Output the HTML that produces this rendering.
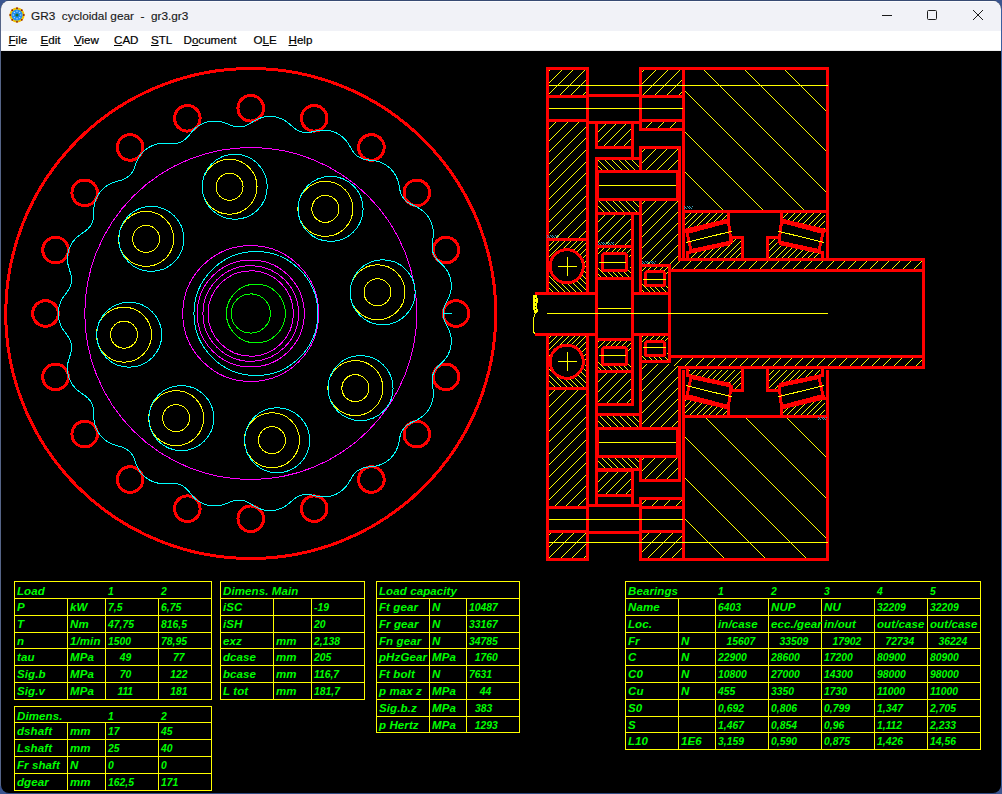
<!DOCTYPE html>
<html><head><meta charset="utf-8"><title>GR3</title>
<style>
html,body{margin:0;padding:0;}
body{width:1002px;height:794px;overflow:hidden;background:#3a5590;position:relative;font-family:"Liberation Sans",sans-serif;}
#win{position:absolute;left:1px;top:1px;width:1000px;height:792px;border-radius:8px;overflow:hidden;background:#000;}
#title{position:absolute;left:-1px;top:-1px;width:1002px;height:31px;background:#f1f2f7;border-top:0;}
#hl{position:absolute;left:0;top:1px;width:1002px;height:1px;background:#fbfbfd;}
#ttxt{position:absolute;left:31px;top:9px;font-size:11.8px;color:#1a1a1a;-webkit-text-stroke:0.15px #1a1a1a;white-space:pre;}
#menu{position:absolute;left:-1px;top:30px;width:1002px;height:19px;background:#ffffff;border-bottom:1px solid #f0f0f0;}
#menu span{font-size:11.6px;color:#000;-webkit-text-stroke:0.2px #000;line-height:19px;top:-1px !important;}
#menu u{text-decoration:underline;text-underline-offset:1px;}
.tb{position:absolute;top:0;height:31px;}
</style></head><body>
<div id="win">
<svg width="1002" height="794" viewBox="0 0 1002 794" shape-rendering="crispEdges" style="position:absolute;left:-1px;top:-1px"><defs><clipPath id="c1"><polygon points="549,70 586,70 586,95 549,95"/></clipPath><clipPath id="c2"><polygon points="549,122 586,122 586,238 549,238"/></clipPath><clipPath id="c3"><polygon points="549,241 586,241 586,266 549,266"/></clipPath><clipPath id="c4"><polygon points="549,266 586,266 586,292 549,292"/></clipPath><clipPath id="c5"><polygon points="642,70 682,70 682,95 642,95"/></clipPath><clipPath id="c6"><polygon points="642,122 682,122 682,128 642,128"/></clipPath><clipPath id="c7"><polygon points="685,70 826,70 826,210 685,210"/></clipPath><clipPath id="c8"><polygon points="598,160 639,160 639,170 598,170"/></clipPath><clipPath id="c9"><polygon points="642,149 678,149 678,170 642,170"/></clipPath><clipPath id="c10"><polygon points="598,201 639,201 639,212 598,212"/></clipPath><clipPath id="c11"><polygon points="642,201 678,201 678,264 642,264"/></clipPath><clipPath id="c12"><polygon points="642,267 668,267 668,279 642,279"/></clipPath><clipPath id="c13"><polygon points="642,279 668,279 668,292 642,292"/></clipPath><clipPath id="c14"><polygon points="671,261 922,261 922,269 671,269"/></clipPath><clipPath id="c15"><polygon points="685,213 727,213 727,220 686,230 685,230"/></clipPath><clipPath id="c16"><polygon points="689,251 730,243 730,239 742,239 742,258 689,258"/></clipPath><clipPath id="c17"><polygon points="825,213 783,213 783,220 824,230 825,230"/></clipPath><clipPath id="c18"><polygon points="821,251 780,243 780,239 768,239 768,258 821,258"/></clipPath><clipPath id="c19"><polygon points="549,533 586,533 586,558 549,558"/></clipPath><clipPath id="c20"><polygon points="549,390 586,390 586,506 549,506"/></clipPath><clipPath id="c21"><polygon points="549,362 586,362 586,387 549,387"/></clipPath><clipPath id="c22"><polygon points="549,336 586,336 586,362 549,362"/></clipPath><clipPath id="c23"><polygon points="642,533 682,533 682,558 642,558"/></clipPath><clipPath id="c24"><polygon points="642,500 682,500 682,506 642,506"/></clipPath><clipPath id="c25"><polygon points="685,418 826,418 826,558 685,558"/></clipPath><clipPath id="c26"><polygon points="598,458 639,458 639,468 598,468"/></clipPath><clipPath id="c27"><polygon points="642,458 678,458 678,479 642,479"/></clipPath><clipPath id="c28"><polygon points="598,416 639,416 639,427 598,427"/></clipPath><clipPath id="c29"><polygon points="642,364 678,364 678,427 642,427"/></clipPath><clipPath id="c30"><polygon points="642,348 668,348 668,360 642,360"/></clipPath><clipPath id="c31"><polygon points="642,335 668,335 668,348 642,348"/></clipPath><clipPath id="c32"><polygon points="671,358 922,358 922,366 671,366"/></clipPath><clipPath id="c33"><polygon points="685,415 727,415 727,408 686,398 685,398"/></clipPath><clipPath id="c34"><polygon points="689,377 730,385 730,389 742,389 742,370 689,370"/></clipPath><clipPath id="c35"><polygon points="825,415 783,415 783,408 824,398 825,398"/></clipPath><clipPath id="c36"><polygon points="821,377 780,385 780,389 768,389 768,370 821,370"/></clipPath><clipPath id="c37"><polygon points="598,124 631,124 631,146 598,146"/></clipPath><clipPath id="c38"><polygon points="598,215 631,215 631,245 598,245"/></clipPath><clipPath id="c39"><polygon points="598,248 631,248 631,262 598,262"/></clipPath><clipPath id="c40"><polygon points="598,262 631,262 631,277 598,277"/></clipPath><clipPath id="c41"><polygon points="598,472 631,472 631,494 598,494"/></clipPath><clipPath id="c42"><polygon points="598,373 631,373 631,403 598,403"/></clipPath><clipPath id="c43"><polygon points="598,356 631,356 631,370 598,370"/></clipPath><clipPath id="c44"><polygon points="598,341 631,341 631,356 598,356"/></clipPath></defs><circle cx="250.75" cy="313.5" r="245.0" fill="none" stroke="#ff0000" stroke-width="3"/>
<circle cx="456.0" cy="313.5" r="12.8" fill="none" stroke="#ff0000" stroke-width="3"/>
<circle cx="445.9543499695802" cy="376.925738095458" r="12.8" fill="none" stroke="#ff0000" stroke-width="3"/>
<circle cx="416.800738095458" cy="434.1429230330301" r="12.8" fill="none" stroke="#ff0000" stroke-width="3"/>
<circle cx="371.3929230330301" cy="479.550738095458" r="12.8" fill="none" stroke="#ff0000" stroke-width="3"/>
<circle cx="314.175738095458" cy="508.7043499695802" r="12.8" fill="none" stroke="#ff0000" stroke-width="3"/>
<circle cx="250.75" cy="518.75" r="12.8" fill="none" stroke="#ff0000" stroke-width="3"/>
<circle cx="187.32426190454206" cy="508.7043499695803" r="12.8" fill="none" stroke="#ff0000" stroke-width="3"/>
<circle cx="130.1070769669699" cy="479.550738095458" r="12.8" fill="none" stroke="#ff0000" stroke-width="3"/>
<circle cx="84.69926190454206" cy="434.1429230330301" r="12.8" fill="none" stroke="#ff0000" stroke-width="3"/>
<circle cx="55.54565003041975" cy="376.925738095458" r="12.8" fill="none" stroke="#ff0000" stroke-width="3"/>
<circle cx="45.5" cy="313.5" r="12.8" fill="none" stroke="#ff0000" stroke-width="3"/>
<circle cx="55.545650030419694" cy="250.07426190454214" r="12.8" fill="none" stroke="#ff0000" stroke-width="3"/>
<circle cx="84.69926190454203" cy="192.8570769669699" r="12.8" fill="none" stroke="#ff0000" stroke-width="3"/>
<circle cx="130.10707696696988" cy="147.44926190454206" r="12.8" fill="none" stroke="#ff0000" stroke-width="3"/>
<circle cx="187.32426190454203" cy="118.29565003041975" r="12.8" fill="none" stroke="#ff0000" stroke-width="3"/>
<circle cx="250.74999999999997" cy="108.25" r="12.8" fill="none" stroke="#ff0000" stroke-width="3"/>
<circle cx="314.1757380954579" cy="118.29565003041972" r="12.8" fill="none" stroke="#ff0000" stroke-width="3"/>
<circle cx="371.39292303303006" cy="147.44926190454203" r="12.8" fill="none" stroke="#ff0000" stroke-width="3"/>
<circle cx="416.800738095458" cy="192.85707696696983" r="12.8" fill="none" stroke="#ff0000" stroke-width="3"/>
<circle cx="445.9543499695802" cy="250.074261904542" r="12.8" fill="none" stroke="#ff0000" stroke-width="3"/>
<polygon points="443.20,313.50 443.21,314.03 443.23,314.56 443.27,315.08 443.32,315.60 443.39,316.11 443.46,316.61 443.55,317.10 443.65,317.57 443.76,318.03 443.88,318.48 444.00,318.91 444.13,319.32 444.26,319.73 444.39,320.11 444.53,320.49 444.67,320.85 444.81,321.19 444.95,321.53 445.09,321.85 445.23,322.16 445.37,322.46 445.50,322.76 445.64,323.04 445.77,323.32 445.91,323.58 446.04,323.85 446.17,324.10 446.30,324.36 446.42,324.60 446.55,324.84 446.67,325.08 446.79,325.32 446.92,325.55 447.04,325.79 447.15,326.01 447.27,326.24 447.39,326.47 447.50,326.70 447.62,326.92 447.73,327.15 447.84,327.38 447.95,327.60 448.06,327.83 448.17,328.06 448.28,328.29 448.39,328.52 448.49,328.75 448.60,328.98 448.70,329.22 448.81,329.46 448.91,329.70 449.01,329.94 449.11,330.18 449.21,330.43 449.30,330.67 449.40,330.92 449.49,331.18 449.58,331.43 449.68,331.69 449.76,331.95 449.85,332.22 449.94,332.48 450.02,332.75 450.10,333.02 450.18,333.30 450.26,333.58 450.34,333.86 450.41,334.14 450.48,334.43 450.55,334.71 450.62,335.00 450.68,335.30 450.74,335.59 450.80,335.89 450.85,336.19 450.91,336.50 450.95,336.80 451.00,337.11 451.04,337.42 451.08,337.73 451.12,338.05 451.15,338.36 451.18,338.68 451.21,339.00 451.24,339.32 451.26,339.64 451.27,339.97 451.28,340.29 451.29,340.62 451.30,340.95 451.30,341.28 451.30,341.61 451.29,341.94 451.28,342.27 451.27,342.61 451.25,342.94 451.23,343.27 451.20,343.61 451.18,343.94 451.14,344.28 451.11,344.61 451.06,344.94 451.02,345.28 450.97,345.61 450.92,345.94 450.86,346.28 450.80,346.61 450.74,346.94 450.67,347.27 450.60,347.60 450.52,347.93 450.44,348.25 450.36,348.58 450.28,348.90 450.19,349.22 450.09,349.54 450.00,349.86 449.89,350.18 449.79,350.49 449.68,350.80 449.57,351.11 449.46,351.42 449.34,351.73 449.23,352.03 449.10,352.33 448.98,352.63 448.85,352.92 448.72,353.22 448.59,353.51 448.45,353.79 448.31,354.08 448.17,354.36 448.03,354.63 447.89,354.91 447.74,355.18 447.59,355.45 447.44,355.71 447.29,355.98 447.13,356.23 446.98,356.49 446.82,356.74 446.66,356.99 446.50,357.24 446.34,357.48 446.17,357.72 446.01,357.95 445.84,358.18 445.68,358.41 445.51,358.64 445.34,358.86 445.18,359.08 445.01,359.30 444.84,359.51 444.66,359.72 444.49,359.93 444.32,360.13 444.15,360.34 443.98,360.54 443.80,360.73 443.63,360.93 443.46,361.12 443.28,361.31 443.11,361.50 442.93,361.68 442.75,361.87 442.58,362.05 442.40,362.23 442.22,362.41 442.04,362.59 441.87,362.77 441.69,362.95 441.51,363.12 441.32,363.30 441.14,363.48 440.96,363.65 440.77,363.83 440.58,364.01 440.39,364.19 440.20,364.37 440.01,364.56 439.81,364.75 439.61,364.94 439.41,365.13 439.21,365.33 439.00,365.53 438.79,365.74 438.57,365.95 438.35,366.17 438.13,366.40 437.91,366.64 437.67,366.88 437.44,367.14 437.20,367.40 436.96,367.68 436.71,367.97 436.46,368.27 436.21,368.58 435.96,368.91 435.70,369.26 435.45,369.62 435.19,369.99 434.94,370.39 434.69,370.79 434.44,371.22 434.20,371.66 433.97,372.11 433.75,372.57 433.53,373.05 433.33,373.54 433.15,374.04 432.97,374.54 432.82,375.04 432.67,375.55 432.55,376.06 432.44,376.57 432.34,377.07 432.26,377.56 432.19,378.04 432.14,378.52 432.10,378.99 432.07,379.44 432.05,379.88 432.04,380.31 432.03,380.73 432.04,381.13 432.05,381.52 432.07,381.90 432.09,382.27 432.11,382.63 432.14,382.97 432.17,383.31 432.21,383.63 432.24,383.95 432.28,384.26 432.32,384.56 432.36,384.86 432.40,385.14 432.44,385.43 432.48,385.70 432.52,385.98 432.56,386.24 432.60,386.51 432.63,386.77 432.67,387.03 432.71,387.29 432.75,387.54 432.79,387.79 432.82,388.05 432.86,388.30 432.89,388.55 432.92,388.80 432.96,389.05 432.99,389.30 433.02,389.55 433.04,389.80 433.07,390.06 433.10,390.31 433.12,390.56 433.14,390.82 433.17,391.08 433.19,391.33 433.20,391.59 433.22,391.86 433.23,392.12 433.24,392.38 433.25,392.65 433.26,392.92 433.27,393.19 433.27,393.46 433.27,393.74 433.27,394.02 433.27,394.30 433.26,394.58 433.25,394.86 433.24,395.14 433.22,395.43 433.20,395.72 433.18,396.01 433.16,396.30 433.13,396.59 433.10,396.89 433.07,397.19 433.03,397.49 432.99,397.79 432.95,398.09 432.90,398.39 432.85,398.70 432.80,399.00 432.74,399.31 432.68,399.62 432.61,399.92 432.54,400.23 432.47,400.54 432.39,400.86 432.31,401.17 432.23,401.48 432.14,401.79 432.05,402.10 431.95,402.41 431.86,402.73 431.75,403.04 431.64,403.35 431.53,403.66 431.42,403.97 431.30,404.29 431.18,404.60 431.05,404.90 430.92,405.21 430.79,405.52 430.65,405.83 430.51,406.13 430.36,406.43 430.21,406.74 430.06,407.04 429.90,407.34 429.74,407.63 429.58,407.93 429.41,408.22 429.25,408.51 429.07,408.80 428.90,409.09 428.72,409.37 428.54,409.65 428.35,409.93 428.16,410.21 427.97,410.48 427.78,410.76 427.58,411.02 427.38,411.29 427.18,411.55 426.98,411.81 426.77,412.07 426.56,412.32 426.35,412.57 426.14,412.82 425.93,413.06 425.71,413.30 425.49,413.53 425.28,413.77 425.06,413.99 424.83,414.22 424.61,414.44 424.39,414.66 424.16,414.87 423.93,415.09 423.71,415.29 423.48,415.50 423.25,415.70 423.02,415.89 422.79,416.09 422.56,416.28 422.33,416.46 422.10,416.64 421.86,416.82 421.63,417.00 421.40,417.17 421.17,417.33 420.94,417.50 420.71,417.66 420.47,417.82 420.24,417.97 420.01,418.12 419.78,418.27 419.55,418.42 419.32,418.56 419.09,418.70 418.86,418.84 418.64,418.97 418.41,419.10 418.18,419.23 417.95,419.36 417.73,419.48 417.50,419.60 417.27,419.72 417.05,419.84 416.82,419.96 416.59,420.07 416.37,420.19 416.14,420.30 415.91,420.41 415.69,420.52 415.46,420.63 415.23,420.73 415.00,420.84 414.77,420.95 414.54,421.06 414.30,421.17 414.06,421.28 413.83,421.39 413.58,421.50 413.34,421.61 413.09,421.72 412.84,421.84 412.58,421.96 412.32,422.08 412.06,422.21 411.79,422.34 411.52,422.47 411.23,422.61 410.95,422.76 410.65,422.91 410.35,423.07 410.04,423.24 409.73,423.42 409.41,423.61 409.08,423.81 408.74,424.01 408.39,424.24 408.04,424.47 407.69,424.72 407.33,424.99 406.96,425.27 406.59,425.56 406.22,425.87 405.85,426.20 405.49,426.55 405.12,426.91 404.76,427.28 404.41,427.67 404.07,428.08 403.73,428.49 403.41,428.91 403.11,429.34 402.81,429.78 402.54,430.22 402.27,430.66 402.03,431.10 401.80,431.54 401.59,431.98 401.39,432.41 401.20,432.83 401.04,433.25 400.88,433.66 400.74,434.05 400.60,434.44 400.48,434.82 400.37,435.19 400.27,435.55 400.17,435.90 400.08,436.24 400.00,436.57 399.92,436.90 399.85,437.21 399.78,437.52 399.72,437.82 399.66,438.12 399.60,438.40 399.55,438.69 399.49,438.96 399.44,439.24 399.39,439.51 399.34,439.77 399.30,440.03 399.25,440.29 399.20,440.55 399.15,440.80 399.11,441.06 399.06,441.31 399.01,441.56 398.96,441.80 398.91,442.05 398.86,442.30 398.81,442.55 398.76,442.79 398.70,443.04 398.65,443.29 398.59,443.54 398.53,443.78 398.47,444.03 398.41,444.28 398.34,444.53 398.28,444.78 398.21,445.04 398.14,445.29 398.06,445.54 397.99,445.80 397.91,446.06 397.83,446.31 397.74,446.57 397.66,446.83 397.57,447.09 397.47,447.35 397.38,447.62 397.28,447.88 397.18,448.15 397.07,448.41 396.96,448.68 396.85,448.95 396.74,449.21 396.62,449.48 396.49,449.75 396.37,450.02 396.24,450.29 396.10,450.56 395.97,450.83 395.83,451.11 395.68,451.38 395.53,451.65 395.38,451.92 395.22,452.19 395.06,452.46 394.90,452.73 394.73,453.00 394.56,453.27 394.39,453.54 394.21,453.81 394.03,454.08 393.84,454.34 393.65,454.61 393.46,454.87 393.26,455.13 393.06,455.39 392.85,455.65 392.64,455.91 392.43,456.17 392.22,456.42 392.00,456.67 391.78,456.93 391.55,457.17 391.33,457.42 391.09,457.66 390.86,457.90 390.62,458.14 390.38,458.38 390.14,458.61 389.89,458.84 389.64,459.07 389.39,459.30 389.14,459.52 388.88,459.74 388.63,459.95 388.36,460.17 388.10,460.37 387.84,460.58 387.57,460.78 387.30,460.98 387.03,461.18 386.76,461.37 386.49,461.56 386.21,461.74 385.94,461.92 385.66,462.10 385.38,462.27 385.10,462.44 384.82,462.61 384.54,462.77 384.26,462.93 383.98,463.08 383.69,463.24 383.41,463.38 383.13,463.53 382.84,463.66 382.56,463.80 382.28,463.93 382.00,464.06 381.71,464.18 381.43,464.30 381.15,464.42 380.87,464.53 380.59,464.64 380.31,464.75 380.03,464.85 379.75,464.95 379.47,465.05 379.20,465.14 378.92,465.23 378.65,465.31 378.37,465.39 378.10,465.47 377.83,465.55 377.56,465.62 377.29,465.69 377.03,465.76 376.76,465.82 376.50,465.88 376.23,465.94 375.97,466.00 375.71,466.05 375.45,466.10 375.19,466.15 374.94,466.20 374.68,466.24 374.43,466.29 374.17,466.33 373.92,466.37 373.67,466.40 373.42,466.44 373.17,466.47 372.92,466.51 372.67,466.54 372.42,466.57 372.16,466.60 371.91,466.63 371.66,466.66 371.41,466.68 371.15,466.71 370.90,466.74 370.64,466.76 370.38,466.79 370.12,466.81 369.85,466.84 369.58,466.87 369.31,466.90 369.03,466.93 368.75,466.96 368.46,466.99 368.16,467.02 367.86,467.06 367.56,467.10 367.24,467.14 366.92,467.19 366.59,467.24 366.24,467.30 365.89,467.36 365.53,467.43 365.16,467.51 364.78,467.59 364.39,467.68 363.99,467.79 363.57,467.90 363.15,468.03 362.72,468.17 362.28,468.32 361.83,468.49 361.38,468.67 360.92,468.87 360.46,469.08 360.00,469.31 359.54,469.56 359.08,469.82 358.62,470.09 358.18,470.38 357.74,470.68 357.32,471.00 356.91,471.32 356.51,471.65 356.12,471.99 355.76,472.32 355.40,472.67 355.07,473.01 354.75,473.35 354.45,473.69 354.16,474.03 353.88,474.36 353.63,474.69 353.38,475.01 353.15,475.33 352.93,475.64 352.72,475.94 352.52,476.24 352.33,476.53 352.15,476.81 351.97,477.09 351.81,477.36 351.65,477.63 351.49,477.89 351.34,478.15 351.19,478.40 351.05,478.65 350.91,478.89 350.78,479.13 350.64,479.37 350.51,479.60 350.38,479.83 350.25,480.06 350.13,480.28 350.00,480.51 349.87,480.73 349.75,480.95 349.62,481.17 349.49,481.39 349.36,481.61 349.24,481.83 349.11,482.04 348.98,482.26 348.84,482.48 348.71,482.69 348.57,482.91 348.44,483.12 348.30,483.34 348.16,483.55 348.01,483.77 347.87,483.99 347.72,484.20 347.57,484.42 347.42,484.64 347.26,484.85 347.10,485.07 346.94,485.29 346.77,485.50 346.61,485.72 346.44,485.94 346.26,486.16 346.08,486.37 345.90,486.59 345.72,486.81 345.53,487.03 345.34,487.24 345.14,487.46 344.95,487.67 344.74,487.89 344.54,488.10 344.33,488.32 344.12,488.53 343.90,488.74 343.68,488.96 343.46,489.17 343.23,489.38 343.00,489.58 342.77,489.79 342.53,489.99 342.29,490.20 342.05,490.40 341.80,490.60 341.55,490.80 341.29,491.00 341.04,491.19 340.78,491.38 340.51,491.57 340.24,491.76 339.97,491.95 339.70,492.13 339.42,492.31 339.15,492.49 338.86,492.66 338.58,492.84 338.29,493.00 338.00,493.17 337.71,493.33 337.42,493.49 337.12,493.65 336.82,493.81 336.52,493.96 336.22,494.10 335.91,494.25 335.60,494.39 335.30,494.52 334.99,494.66 334.68,494.79 334.36,494.91 334.05,495.03 333.73,495.15 333.42,495.27 333.10,495.38 332.78,495.48 332.47,495.59 332.15,495.69 331.83,495.78 331.51,495.87 331.19,495.96 330.87,496.04 330.55,496.12 330.23,496.20 329.91,496.27 329.59,496.34 329.27,496.40 328.95,496.46 328.64,496.52 328.32,496.57 328.00,496.62 327.69,496.67 327.38,496.71 327.06,496.75 326.75,496.78 326.44,496.81 326.13,496.84 325.83,496.87 325.52,496.89 325.22,496.90 324.92,496.92 324.62,496.93 324.32,496.94 324.02,496.94 323.73,496.94 323.43,496.94 323.14,496.94 322.86,496.93 322.57,496.92 322.29,496.91 322.00,496.89 321.72,496.88 321.45,496.86 321.17,496.83 320.90,496.81 320.63,496.78 320.36,496.75 320.09,496.72 319.83,496.69 319.56,496.66 319.30,496.62 319.05,496.58 318.79,496.54 318.53,496.50 318.28,496.46 318.03,496.41 317.78,496.37 317.53,496.32 317.28,496.27 317.03,496.22 316.78,496.17 316.53,496.12 316.29,496.07 316.04,496.01 315.79,495.96 315.54,495.90 315.30,495.85 315.05,495.79 314.79,495.73 314.54,495.67 314.29,495.61 314.03,495.55 313.76,495.49 313.50,495.43 313.23,495.36 312.95,495.30 312.67,495.24 312.39,495.17 312.10,495.11 311.80,495.05 311.49,494.99 311.17,494.93 310.85,494.87 310.51,494.81 310.16,494.75 309.81,494.70 309.44,494.65 309.06,494.60 308.66,494.56 308.26,494.52 307.84,494.49 307.40,494.47 306.96,494.46 306.50,494.45 306.02,494.46 305.54,494.48 305.05,494.51 304.55,494.55 304.04,494.61 303.52,494.69 303.01,494.78 302.49,494.89 301.97,495.01 301.46,495.14 300.95,495.29 300.45,495.46 299.96,495.63 299.48,495.82 299.02,496.02 298.57,496.22 298.13,496.44 297.71,496.65 297.30,496.88 296.91,497.10 296.54,497.33 296.18,497.55 295.83,497.78 295.51,498.00 295.19,498.22 294.89,498.45 294.60,498.66 294.32,498.88 294.05,499.09 293.79,499.30 293.54,499.50 293.29,499.70 293.06,499.90 292.83,500.10 292.61,500.29 292.39,500.48 292.18,500.67 291.97,500.85 291.76,501.03 291.56,501.21 291.36,501.39 291.16,501.56 290.97,501.74 290.78,501.91 290.58,502.08 290.39,502.25 290.20,502.41 290.01,502.58 289.82,502.75 289.63,502.91 289.43,503.07 289.24,503.24 289.05,503.40 288.85,503.56 288.65,503.72 288.46,503.88 288.25,504.04 288.05,504.20 287.85,504.36 287.64,504.51 287.43,504.67 287.22,504.83 287.01,504.98 286.79,505.14 286.57,505.29 286.35,505.44 286.12,505.60 285.90,505.75 285.66,505.90 285.43,506.05 285.19,506.20 284.95,506.34 284.71,506.49 284.46,506.64 284.21,506.78 283.96,506.92 283.71,507.06 283.45,507.20 283.18,507.34 282.92,507.47 282.65,507.61 282.38,507.74 282.10,507.87 281.83,508.00 281.55,508.12 281.26,508.24 280.98,508.37 280.69,508.48 280.39,508.60 280.10,508.71 279.80,508.82 279.50,508.93 279.20,509.04 278.89,509.14 278.58,509.24 278.27,509.33 277.96,509.42 277.65,509.51 277.33,509.60 277.01,509.68 276.69,509.76 276.37,509.84 276.04,509.91 275.72,509.98 275.39,510.05 275.06,510.11 274.73,510.16 274.40,510.22 274.07,510.27 273.74,510.32 273.40,510.36 273.07,510.40 272.73,510.43 272.40,510.46 272.06,510.49 271.72,510.52 271.39,510.53 271.05,510.55 270.71,510.56 270.38,510.57 270.04,510.57 269.71,510.57 269.37,510.57 269.04,510.56 268.70,510.55 268.37,510.54 268.04,510.52 267.71,510.49 267.38,510.47 267.05,510.44 266.73,510.40 266.40,510.37 266.08,510.32 265.76,510.28 265.44,510.23 265.12,510.18 264.80,510.13 264.49,510.07 264.18,510.01 263.87,509.94 263.56,509.88 263.26,509.81 262.96,509.74 262.66,509.66 262.36,509.58 262.07,509.50 261.78,509.42 261.49,509.33 261.20,509.24 260.92,509.15 260.64,509.06 260.36,508.96 260.08,508.87 259.81,508.77 259.54,508.67 259.28,508.56 259.01,508.46 258.75,508.35 258.50,508.25 258.24,508.14 257.99,508.03 257.74,507.91 257.49,507.80 257.25,507.68 257.01,507.57 256.77,507.45 256.54,507.33 256.30,507.21 256.07,507.09 255.84,506.97 255.61,506.85 255.39,506.72 255.17,506.60 254.94,506.47 254.72,506.35 254.50,506.22 254.29,506.09 254.07,505.97 253.85,505.84 253.64,505.70 253.42,505.57 253.20,505.44 252.99,505.31 252.77,505.17 252.55,505.03 252.33,504.90 252.11,504.76 251.89,504.62 251.66,504.47 251.43,504.33 251.20,504.18 250.96,504.04 250.72,503.89 250.47,503.74 250.22,503.58 249.96,503.43 249.69,503.27 249.42,503.11 249.14,502.95 248.84,502.79 248.54,502.62 248.22,502.45 247.90,502.29 247.56,502.12 247.21,501.95 246.84,501.79 246.46,501.62 246.07,501.46 245.66,501.30 245.23,501.14 244.79,500.99 244.34,500.85 243.87,500.71 243.38,500.59 242.89,500.47 242.38,500.37 241.87,500.28 241.35,500.20 240.82,500.14 240.29,500.10 239.76,500.06 239.23,500.05 238.71,500.05 238.19,500.06 237.68,500.09 237.18,500.13 236.70,500.19 236.22,500.25 235.76,500.32 235.31,500.41 234.87,500.49 234.45,500.59 234.05,500.69 233.66,500.79 233.28,500.90 232.91,501.01 232.56,501.12 232.22,501.23 231.89,501.34 231.57,501.46 231.26,501.57 230.96,501.68 230.67,501.79 230.39,501.90 230.11,502.01 229.84,502.12 229.58,502.23 229.32,502.34 229.06,502.44 228.81,502.55 228.56,502.65 228.32,502.75 228.08,502.86 227.84,502.96 227.60,503.05 227.36,503.15 227.13,503.25 226.89,503.34 226.66,503.44 226.42,503.53 226.19,503.63 225.95,503.72 225.72,503.81 225.48,503.90 225.24,503.99 225.00,504.07 224.76,504.16 224.52,504.24 224.28,504.33 224.03,504.41 223.78,504.49 223.53,504.57 223.28,504.65 223.03,504.73 222.77,504.80 222.51,504.88 222.25,504.95 221.99,505.02 221.72,505.09 221.46,505.15 221.18,505.22 220.91,505.28 220.63,505.34 220.36,505.40 220.07,505.46 219.79,505.51 219.50,505.56 219.22,505.61 218.92,505.65 218.63,505.70 218.33,505.74 218.04,505.78 217.74,505.81 217.43,505.84 217.13,505.87 216.82,505.90 216.51,505.92 216.20,505.94 215.89,505.96 215.57,505.97 215.25,505.98 214.94,505.99 214.62,505.99 214.29,505.99 213.97,505.98 213.65,505.98 213.32,505.96 213.00,505.95 212.67,505.93 212.34,505.91 212.01,505.88 211.68,505.85 211.35,505.81 211.02,505.77 210.69,505.73 210.36,505.69 210.03,505.64 209.70,505.58 209.37,505.52 209.04,505.46 208.71,505.40 208.38,505.33 208.05,505.25 207.72,505.17 207.40,505.09 207.07,505.01 206.74,504.92 206.42,504.83 206.10,504.73 205.78,504.63 205.46,504.53 205.14,504.42 204.82,504.31 204.51,504.20 204.19,504.08 203.88,503.96 203.58,503.83 203.27,503.71 202.97,503.58 202.66,503.44 202.37,503.31 202.07,503.17 201.78,503.02 201.48,502.88 201.20,502.73 200.91,502.58 200.63,502.43 200.35,502.27 200.07,502.12 199.80,501.96 199.53,501.80 199.26,501.63 199.00,501.47 198.74,501.30 198.48,501.13 198.23,500.96 197.98,500.79 197.73,500.61 197.49,500.44 197.24,500.26 197.01,500.08 196.77,499.90 196.54,499.72 196.32,499.54 196.09,499.36 195.87,499.17 195.66,498.99 195.44,498.80 195.23,498.62 195.03,498.43 194.82,498.25 194.62,498.06 194.43,497.87 194.23,497.68 194.04,497.50 193.85,497.31 193.66,497.12 193.48,496.93 193.30,496.74 193.12,496.55 192.94,496.36 192.77,496.17 192.60,495.98 192.43,495.79 192.26,495.60 192.09,495.41 191.93,495.22 191.76,495.03 191.60,494.83 191.44,494.64 191.28,494.45 191.11,494.25 190.95,494.06 190.79,493.86 190.63,493.66 190.47,493.46 190.30,493.26 190.14,493.05 189.97,492.84 189.80,492.63 189.63,492.42 189.46,492.21 189.28,491.99 189.10,491.77 188.91,491.54 188.72,491.31 188.52,491.08 188.32,490.84 188.11,490.60 187.89,490.35 187.66,490.10 187.42,489.85 187.17,489.58 186.91,489.32 186.64,489.05 186.36,488.77 186.06,488.49 185.74,488.21 185.42,487.93 185.07,487.64 184.71,487.36 184.34,487.07 183.95,486.79 183.54,486.51 183.12,486.24 182.68,485.97 182.23,485.72 181.76,485.47 181.29,485.23 180.81,485.01 180.32,484.80 179.83,484.61 179.33,484.43 178.84,484.27 178.34,484.12 177.86,483.99 177.37,483.88 176.90,483.77 176.43,483.69 175.97,483.61 175.53,483.55 175.09,483.50 174.67,483.45 174.26,483.42 173.86,483.39 173.48,483.38 173.10,483.36 172.74,483.36 172.38,483.35 172.04,483.36 171.71,483.36 171.38,483.37 171.07,483.38 170.76,483.39 170.46,483.40 170.16,483.42 169.87,483.43 169.59,483.45 169.31,483.47 169.04,483.48 168.77,483.50 168.51,483.52 168.24,483.54 167.98,483.55 167.72,483.57 167.47,483.59 167.21,483.60 166.96,483.62 166.71,483.63 166.45,483.64 166.20,483.65 165.95,483.67 165.70,483.68 165.44,483.68 165.19,483.69 164.94,483.70 164.68,483.70 164.43,483.70 164.17,483.70 163.91,483.70 163.65,483.70 163.39,483.70 163.13,483.69 162.86,483.68 162.60,483.67 162.33,483.66 162.06,483.64 161.79,483.62 161.51,483.60 161.24,483.58 160.96,483.56 160.69,483.53 160.41,483.50 160.12,483.46 159.84,483.43 159.56,483.39 159.27,483.34 158.98,483.30 158.69,483.25 158.40,483.20 158.11,483.14 157.81,483.08 157.52,483.02 157.22,482.95 156.92,482.88 156.63,482.81 156.33,482.73 156.03,482.65 155.72,482.57 155.42,482.48 155.12,482.39 154.82,482.29 154.51,482.19 154.21,482.09 153.91,481.98 153.60,481.87 153.30,481.76 153.00,481.64 152.69,481.52 152.39,481.39 152.09,481.26 151.79,481.12 151.48,480.99 151.18,480.84 150.88,480.70 150.59,480.55 150.29,480.40 149.99,480.24 149.70,480.08 149.40,479.92 149.11,479.75 148.82,479.58 148.54,479.40 148.25,479.22 147.96,479.04 147.68,478.86 147.40,478.67 147.13,478.48 146.85,478.29 146.58,478.09 146.31,477.89 146.04,477.68 145.77,477.48 145.51,477.27 145.25,477.06 145.00,476.85 144.74,476.63 144.49,476.41 144.25,476.19 144.00,475.97 143.76,475.74 143.53,475.52 143.29,475.29 143.06,475.06 142.84,474.82 142.61,474.59 142.39,474.35 142.18,474.12 141.97,473.88 141.76,473.64 141.55,473.40 141.35,473.16 141.15,472.92 140.96,472.67 140.77,472.43 140.58,472.19 140.40,471.94 140.22,471.70 140.05,471.45 139.87,471.21 139.71,470.96 139.54,470.72 139.38,470.47 139.22,470.22 139.07,469.98 138.92,469.73 138.77,469.49 138.63,469.25 138.49,469.00 138.35,468.76 138.22,468.52 138.09,468.27 137.96,468.03 137.83,467.79 137.71,467.55 137.59,467.31 137.48,467.07 137.36,466.83 137.25,466.59 137.14,466.36 137.04,466.12 136.93,465.88 136.83,465.65 136.73,465.41 136.63,465.18 136.54,464.94 136.44,464.71 136.35,464.47 136.26,464.24 136.16,464.00 136.07,463.77 135.98,463.53 135.90,463.29 135.81,463.05 135.72,462.81 135.63,462.57 135.54,462.33 135.45,462.08 135.36,461.84 135.27,461.58 135.18,461.33 135.08,461.07 134.99,460.81 134.89,460.54 134.79,460.27 134.68,460.00 134.57,459.72 134.46,459.43 134.34,459.13 134.22,458.83 134.09,458.52 133.95,458.21 133.80,457.88 133.65,457.55 133.49,457.21 133.31,456.86 133.13,456.51 132.93,456.14 132.72,455.77 132.49,455.40 132.25,455.01 132.00,454.62 131.73,454.23 131.44,453.84 131.14,453.44 130.82,453.04 130.49,452.65 130.14,452.27 129.77,451.89 129.39,451.51 129.01,451.15 128.61,450.80 128.20,450.46 127.79,450.14 127.37,449.83 126.95,449.54 126.53,449.27 126.11,449.01 125.70,448.77 125.29,448.54 124.88,448.33 124.48,448.13 124.09,447.95 123.71,447.77 123.34,447.61 122.97,447.47 122.62,447.33 122.27,447.20 121.93,447.08 121.60,446.96 121.28,446.86 120.97,446.76 120.66,446.66 120.37,446.57 120.07,446.48 119.79,446.40 119.51,446.32 119.23,446.24 118.96,446.17 118.69,446.09 118.43,446.02 118.17,445.95 117.92,445.88 117.66,445.81 117.41,445.74 117.17,445.68 116.92,445.61 116.67,445.54 116.43,445.47 116.18,445.40 115.94,445.33 115.70,445.26 115.46,445.19 115.22,445.11 114.97,445.04 114.73,444.96 114.49,444.89 114.25,444.81 114.00,444.72 113.76,444.64 113.52,444.56 113.27,444.47 113.02,444.38 112.78,444.28 112.53,444.19 112.28,444.09 112.03,443.99 111.78,443.89 111.53,443.78 111.28,443.67 111.03,443.56 110.77,443.44 110.52,443.33 110.26,443.20 110.01,443.08 109.75,442.95 109.49,442.82 109.24,442.68 108.98,442.55 108.72,442.40 108.46,442.26 108.20,442.11 107.95,441.95 107.69,441.80 107.43,441.64 107.17,441.47 106.91,441.30 106.65,441.13 106.39,440.96 106.14,440.78 105.88,440.60 105.62,440.41 105.37,440.22 105.12,440.02 104.86,439.83 104.61,439.62 104.36,439.42 104.11,439.21 103.86,439.00 103.62,438.78 103.37,438.56 103.13,438.34 102.89,438.11 102.65,437.88 102.41,437.65 102.18,437.41 101.94,437.17 101.71,436.93 101.49,436.68 101.26,436.44 101.04,436.18 100.82,435.93 100.60,435.67 100.39,435.41 100.17,435.15 99.97,434.89 99.76,434.62 99.56,434.35 99.36,434.08 99.16,433.80 98.97,433.53 98.78,433.25 98.60,432.97 98.41,432.69 98.24,432.40 98.06,432.12 97.89,431.83 97.72,431.55 97.56,431.26 97.40,430.97 97.24,430.68 97.09,430.39 96.94,430.09 96.80,429.80 96.66,429.51 96.52,429.22 96.39,428.92 96.26,428.63 96.13,428.33 96.01,428.04 95.89,427.75 95.78,427.45 95.67,427.16 95.56,426.87 95.46,426.57 95.36,426.28 95.26,425.99 95.17,425.70 95.08,425.41 95.00,425.12 94.92,424.84 94.84,424.55 94.77,424.26 94.70,423.98 94.63,423.70 94.56,423.42 94.50,423.14 94.44,422.86 94.39,422.58 94.34,422.31 94.29,422.03 94.24,421.76 94.20,421.49 94.16,421.22 94.12,420.95 94.08,420.69 94.05,420.42 94.02,420.16 93.99,419.90 93.96,419.64 93.94,419.38 93.91,419.12 93.89,418.86 93.87,418.61 93.86,418.35 93.84,418.10 93.83,417.84 93.81,417.59 93.80,417.34 93.79,417.09 93.78,416.83 93.77,416.58 93.77,416.33 93.76,416.08 93.75,415.82 93.75,415.56 93.74,415.31 93.74,415.05 93.73,414.78 93.73,414.52 93.72,414.25 93.72,413.98 93.71,413.70 93.71,413.42 93.70,413.13 93.69,412.84 93.68,412.54 93.67,412.24 93.65,411.92 93.63,411.60 93.61,411.27 93.59,410.94 93.56,410.59 93.52,410.23 93.48,409.86 93.43,409.48 93.38,409.09 93.31,408.69 93.24,408.27 93.16,407.85 93.06,407.41 92.95,406.97 92.83,406.51 92.70,406.05 92.55,405.58 92.38,405.11 92.20,404.63 92.01,404.15 91.79,403.67 91.56,403.19 91.32,402.72 91.06,402.25 90.80,401.80 90.51,401.35 90.22,400.92 89.93,400.50 89.62,400.10 89.31,399.71 89.00,399.33 88.68,398.98 88.37,398.64 88.06,398.31 87.75,398.00 87.44,397.71 87.13,397.43 86.84,397.16 86.54,396.91 86.25,396.67 85.97,396.44 85.69,396.22 85.42,396.01 85.15,395.81 84.89,395.62 84.64,395.43 84.39,395.25 84.14,395.08 83.90,394.91 83.66,394.74 83.43,394.58 83.20,394.42 82.97,394.27 82.75,394.12 82.53,393.97 82.31,393.82 82.09,393.67 81.88,393.53 81.67,393.38 81.46,393.24 81.25,393.09 81.04,392.95 80.83,392.80 80.62,392.66 80.42,392.51 80.21,392.37 80.01,392.22 79.80,392.07 79.60,391.92 79.40,391.76 79.19,391.61 78.99,391.45 78.79,391.29 78.58,391.13 78.38,390.97 78.18,390.80 77.97,390.63 77.77,390.46 77.57,390.28 77.36,390.11 77.16,389.93 76.96,389.74 76.75,389.56 76.55,389.37 76.35,389.17 76.15,388.98 75.95,388.78 75.75,388.57 75.55,388.37 75.35,388.16 75.15,387.95 74.95,387.73 74.75,387.51 74.55,387.29 74.36,387.06 74.16,386.83 73.97,386.59 73.78,386.36 73.59,386.12 73.40,385.87 73.21,385.62 73.02,385.37 72.84,385.12 72.66,384.86 72.48,384.60 72.30,384.33 72.12,384.07 71.95,383.79 71.78,383.52 71.61,383.24 71.44,382.96 71.28,382.68 71.12,382.40 70.96,382.11 70.80,381.82 70.65,381.52 70.50,381.23 70.35,380.93 70.21,380.63 70.07,380.32 69.93,380.02 69.79,379.71 69.66,379.40 69.54,379.09 69.41,378.78 69.29,378.46 69.17,378.15 69.06,377.83 68.95,377.51 68.85,377.19 68.74,376.87 68.65,376.55 68.55,376.22 68.46,375.90 68.38,375.57 68.29,375.25 68.21,374.92 68.14,374.60 68.07,374.27 68.00,373.95 67.94,373.62 67.88,373.29 67.82,372.97 67.77,372.64 67.72,372.32 67.68,371.99 67.64,371.67 67.60,371.35 67.57,371.03 67.54,370.71 67.52,370.39 67.49,370.07 67.48,369.75 67.46,369.44 67.45,369.12 67.44,368.81 67.44,368.50 67.44,368.19 67.44,367.88 67.45,367.58 67.46,367.27 67.47,366.97 67.48,366.67 67.50,366.38 67.52,366.08 67.55,365.79 67.57,365.50 67.60,365.21 67.63,364.92 67.67,364.64 67.70,364.36 67.74,364.08 67.78,363.80 67.83,363.53 67.87,363.26 67.92,362.99 67.97,362.72 68.02,362.46 68.08,362.20 68.13,361.94 68.19,361.68 68.25,361.42 68.30,361.17 68.37,360.92 68.43,360.66 68.49,360.42 68.56,360.17 68.63,359.92 68.69,359.68 68.76,359.43 68.83,359.19 68.90,358.95 68.98,358.71 69.05,358.47 69.13,358.22 69.20,357.98 69.28,357.74 69.36,357.50 69.43,357.25 69.51,357.00 69.59,356.76 69.68,356.50 69.76,356.25 69.84,355.99 69.92,355.73 70.01,355.47 70.10,355.20 70.18,354.92 70.27,354.64 70.35,354.35 70.44,354.05 70.53,353.75 70.62,353.43 70.70,353.11 70.79,352.78 70.87,352.43 70.95,352.08 71.03,351.71 71.11,351.33 71.18,350.93 71.25,350.53 71.31,350.11 71.37,349.67 71.42,349.22 71.45,348.76 71.48,348.28 71.50,347.80 71.50,347.30 71.50,346.79 71.47,346.28 71.44,345.76 71.38,345.23 71.31,344.71 71.23,344.18 71.13,343.66 71.02,343.15 70.89,342.64 70.75,342.14 70.60,341.65 70.44,341.17 70.27,340.71 70.09,340.26 69.91,339.83 69.72,339.42 69.52,339.01 69.33,338.63 69.13,338.26 68.94,337.90 68.74,337.56 68.54,337.23 68.35,336.92 68.16,336.61 67.97,336.32 67.78,336.04 67.59,335.76 67.41,335.50 67.23,335.25 67.05,335.00 66.88,334.76 66.71,334.52 66.54,334.29 66.37,334.06 66.20,333.84 66.04,333.62 65.88,333.41 65.72,333.20 65.56,332.99 65.41,332.78 65.25,332.57 65.10,332.37 64.95,332.16 64.80,331.96 64.65,331.75 64.50,331.55 64.35,331.34 64.21,331.14 64.06,330.93 63.91,330.73 63.77,330.52 63.63,330.31 63.48,330.09 63.34,329.88 63.20,329.67 63.06,329.45 62.92,329.23 62.78,329.01 62.64,328.78 62.51,328.55 62.37,328.32 62.24,328.09 62.10,327.86 61.97,327.62 61.84,327.38 61.71,327.13 61.58,326.89 61.45,326.64 61.32,326.39 61.20,326.13 61.07,325.87 60.95,325.61 60.83,325.35 60.71,325.08 60.60,324.81 60.48,324.53 60.37,324.26 60.26,323.98 60.15,323.69 60.05,323.41 59.94,323.12 59.84,322.83 59.74,322.54 59.65,322.24 59.56,321.94 59.47,321.64 59.38,321.33 59.29,321.03 59.21,320.72 59.13,320.41 59.06,320.09 58.99,319.78 58.92,319.46 58.85,319.14 58.79,318.82 58.73,318.49 58.68,318.17 58.63,317.84 58.58,317.51 58.53,317.18 58.49,316.85 58.46,316.52 58.42,316.19 58.40,315.85 58.37,315.52 58.35,315.18 58.33,314.85 58.32,314.51 58.31,314.17 58.30,313.84 58.30,313.50 58.30,313.16 58.31,312.83 58.32,312.49 58.33,312.15 58.35,311.82 58.37,311.48 58.40,311.15 58.42,310.81 58.46,310.48 58.49,310.15 58.53,309.82 58.58,309.49 58.63,309.16 58.68,308.83 58.73,308.51 58.79,308.18 58.85,307.86 58.92,307.54 58.99,307.22 59.06,306.91 59.13,306.59 59.21,306.28 59.29,305.97 59.38,305.67 59.47,305.36 59.56,305.06 59.65,304.76 59.74,304.46 59.84,304.17 59.94,303.88 60.05,303.59 60.15,303.31 60.26,303.02 60.37,302.74 60.48,302.47 60.60,302.19 60.71,301.92 60.83,301.65 60.95,301.39 61.07,301.13 61.20,300.87 61.32,300.61 61.45,300.36 61.58,300.11 61.71,299.87 61.84,299.62 61.97,299.38 62.10,299.14 62.24,298.91 62.37,298.68 62.51,298.45 62.64,298.22 62.78,297.99 62.92,297.77 63.06,297.55 63.20,297.33 63.34,297.12 63.48,296.91 63.63,296.69 63.77,296.48 63.91,296.27 64.06,296.07 64.21,295.86 64.35,295.66 64.50,295.45 64.65,295.25 64.80,295.04 64.95,294.84 65.10,294.63 65.25,294.43 65.41,294.22 65.56,294.01 65.72,293.80 65.88,293.59 66.04,293.38 66.20,293.16 66.37,292.94 66.54,292.71 66.71,292.48 66.88,292.24 67.05,292.00 67.23,291.75 67.41,291.50 67.59,291.24 67.78,290.96 67.97,290.68 68.16,290.39 68.35,290.08 68.54,289.77 68.74,289.44 68.94,289.10 69.13,288.74 69.33,288.37 69.52,287.99 69.72,287.58 69.91,287.17 70.09,286.74 70.27,286.29 70.44,285.83 70.60,285.35 70.75,284.86 70.89,284.36 71.02,283.85 71.13,283.34 71.23,282.82 71.31,282.29 71.38,281.77 71.44,281.24 71.47,280.72 71.50,280.21 71.50,279.70 71.50,279.20 71.48,278.72 71.45,278.24 71.42,277.78 71.37,277.33 71.31,276.89 71.25,276.47 71.18,276.07 71.11,275.67 71.03,275.29 70.95,274.92 70.87,274.57 70.79,274.22 70.70,273.89 70.62,273.57 70.53,273.25 70.44,272.95 70.35,272.65 70.27,272.36 70.18,272.08 70.10,271.80 70.01,271.53 69.92,271.27 69.84,271.01 69.76,270.75 69.68,270.50 69.59,270.24 69.51,270.00 69.43,269.75 69.36,269.50 69.28,269.26 69.20,269.02 69.13,268.78 69.05,268.53 68.98,268.29 68.90,268.05 68.83,267.81 68.76,267.57 68.69,267.32 68.63,267.08 68.56,266.83 68.49,266.58 68.43,266.34 68.37,266.08 68.30,265.83 68.25,265.58 68.19,265.32 68.13,265.06 68.08,264.80 68.02,264.54 67.97,264.28 67.92,264.01 67.87,263.74 67.83,263.47 67.78,263.20 67.74,262.92 67.70,262.64 67.67,262.36 67.63,262.08 67.60,261.79 67.57,261.50 67.55,261.21 67.52,260.92 67.50,260.62 67.48,260.33 67.47,260.03 67.46,259.73 67.45,259.42 67.44,259.12 67.44,258.81 67.44,258.50 67.44,258.19 67.45,257.88 67.46,257.56 67.48,257.25 67.49,256.93 67.52,256.61 67.54,256.29 67.57,255.97 67.60,255.65 67.64,255.33 67.68,255.01 67.72,254.68 67.77,254.36 67.82,254.03 67.88,253.71 67.94,253.38 68.00,253.05 68.07,252.73 68.14,252.40 68.21,252.08 68.29,251.75 68.38,251.43 68.46,251.10 68.55,250.78 68.65,250.45 68.74,250.13 68.85,249.81 68.95,249.49 69.06,249.17 69.17,248.85 69.29,248.54 69.41,248.22 69.54,247.91 69.66,247.60 69.79,247.29 69.93,246.98 70.07,246.68 70.21,246.37 70.35,246.07 70.50,245.77 70.65,245.48 70.80,245.18 70.96,244.89 71.12,244.60 71.28,244.32 71.44,244.04 71.61,243.76 71.78,243.48 71.95,243.21 72.12,242.93 72.30,242.67 72.48,242.40 72.66,242.14 72.84,241.88 73.02,241.63 73.21,241.38 73.40,241.13 73.59,240.88 73.78,240.64 73.97,240.41 74.16,240.17 74.36,239.94 74.55,239.71 74.75,239.49 74.95,239.27 75.15,239.05 75.35,238.84 75.55,238.63 75.75,238.43 75.95,238.22 76.15,238.02 76.35,237.83 76.55,237.63 76.75,237.44 76.96,237.26 77.16,237.07 77.36,236.89 77.57,236.72 77.77,236.54 77.97,236.37 78.18,236.20 78.38,236.03 78.58,235.87 78.79,235.71 78.99,235.55 79.19,235.39 79.40,235.24 79.60,235.08 79.80,234.93 80.01,234.78 80.21,234.63 80.42,234.49 80.62,234.34 80.83,234.20 81.04,234.05 81.25,233.91 81.46,233.76 81.67,233.62 81.88,233.47 82.09,233.33 82.31,233.18 82.53,233.03 82.75,232.88 82.97,232.73 83.20,232.58 83.43,232.42 83.66,232.26 83.90,232.09 84.14,231.92 84.39,231.75 84.64,231.57 84.89,231.38 85.15,231.19 85.42,230.99 85.69,230.78 85.97,230.56 86.25,230.33 86.54,230.09 86.84,229.84 87.13,229.57 87.44,229.29 87.75,229.00 88.06,228.69 88.37,228.36 88.68,228.02 89.00,227.67 89.31,227.29 89.62,226.90 89.93,226.50 90.22,226.08 90.51,225.65 90.80,225.20 91.06,224.75 91.32,224.28 91.56,223.81 91.79,223.33 92.01,222.85 92.20,222.37 92.38,221.89 92.55,221.42 92.70,220.95 92.83,220.49 92.95,220.03 93.06,219.59 93.16,219.15 93.24,218.73 93.31,218.31 93.38,217.91 93.43,217.52 93.48,217.14 93.52,216.77 93.56,216.41 93.59,216.06 93.61,215.73 93.63,215.40 93.65,215.08 93.67,214.76 93.68,214.46 93.69,214.16 93.70,213.87 93.71,213.58 93.71,213.30 93.72,213.02 93.72,212.75 93.73,212.48 93.73,212.22 93.74,211.95 93.74,211.69 93.75,211.44 93.75,211.18 93.76,210.92 93.77,210.67 93.77,210.42 93.78,210.17 93.79,209.91 93.80,209.66 93.81,209.41 93.83,209.16 93.84,208.90 93.86,208.65 93.87,208.39 93.89,208.14 93.91,207.88 93.94,207.62 93.96,207.36 93.99,207.10 94.02,206.84 94.05,206.58 94.08,206.31 94.12,206.05 94.16,205.78 94.20,205.51 94.24,205.24 94.29,204.97 94.34,204.69 94.39,204.42 94.44,204.14 94.50,203.86 94.56,203.58 94.63,203.30 94.70,203.02 94.77,202.74 94.84,202.45 94.92,202.16 95.00,201.88 95.08,201.59 95.17,201.30 95.26,201.01 95.36,200.72 95.46,200.43 95.56,200.13 95.67,199.84 95.78,199.55 95.89,199.25 96.01,198.96 96.13,198.67 96.26,198.37 96.39,198.08 96.52,197.78 96.66,197.49 96.80,197.20 96.94,196.91 97.09,196.61 97.24,196.32 97.40,196.03 97.56,195.74 97.72,195.45 97.89,195.17 98.06,194.88 98.24,194.60 98.41,194.31 98.60,194.03 98.78,193.75 98.97,193.47 99.16,193.20 99.36,192.92 99.56,192.65 99.76,192.38 99.97,192.11 100.17,191.85 100.39,191.59 100.60,191.33 100.82,191.07 101.04,190.82 101.26,190.56 101.49,190.32 101.71,190.07 101.94,189.83 102.18,189.59 102.41,189.35 102.65,189.12 102.89,188.89 103.13,188.66 103.37,188.44 103.62,188.22 103.86,188.00 104.11,187.79 104.36,187.58 104.61,187.38 104.86,187.17 105.12,186.98 105.37,186.78 105.62,186.59 105.88,186.40 106.14,186.22 106.39,186.04 106.65,185.87 106.91,185.70 107.17,185.53 107.43,185.36 107.69,185.20 107.95,185.05 108.20,184.89 108.46,184.74 108.72,184.60 108.98,184.45 109.24,184.32 109.49,184.18 109.75,184.05 110.01,183.92 110.26,183.80 110.52,183.67 110.77,183.56 111.03,183.44 111.28,183.33 111.53,183.22 111.78,183.11 112.03,183.01 112.28,182.91 112.53,182.81 112.78,182.72 113.02,182.62 113.27,182.53 113.52,182.44 113.76,182.36 114.00,182.28 114.25,182.19 114.49,182.11 114.73,182.04 114.97,181.96 115.22,181.89 115.46,181.81 115.70,181.74 115.94,181.67 116.18,181.60 116.43,181.53 116.67,181.46 116.92,181.39 117.17,181.32 117.41,181.26 117.66,181.19 117.92,181.12 118.17,181.05 118.43,180.98 118.69,180.91 118.96,180.83 119.23,180.76 119.51,180.68 119.79,180.60 120.07,180.52 120.37,180.43 120.66,180.34 120.97,180.24 121.28,180.14 121.60,180.04 121.93,179.92 122.27,179.80 122.62,179.67 122.97,179.53 123.34,179.39 123.71,179.23 124.09,179.05 124.48,178.87 124.88,178.67 125.29,178.46 125.70,178.23 126.11,177.99 126.53,177.73 126.95,177.46 127.37,177.17 127.79,176.86 128.20,176.54 128.61,176.20 129.01,175.85 129.39,175.49 129.77,175.11 130.14,174.73 130.49,174.35 130.82,173.96 131.14,173.56 131.44,173.16 131.73,172.77 132.00,172.38 132.25,171.99 132.49,171.60 132.72,171.23 132.93,170.86 133.13,170.49 133.31,170.14 133.49,169.79 133.65,169.45 133.80,169.12 133.95,168.79 134.09,168.48 134.22,168.17 134.34,167.87 134.46,167.57 134.57,167.28 134.68,167.00 134.79,166.73 134.89,166.46 134.99,166.19 135.08,165.93 135.18,165.67 135.27,165.42 135.36,165.16 135.45,164.92 135.54,164.67 135.63,164.43 135.72,164.19 135.81,163.95 135.90,163.71 135.98,163.47 136.07,163.23 136.16,163.00 136.26,162.76 136.35,162.53 136.44,162.29 136.54,162.06 136.63,161.82 136.73,161.59 136.83,161.35 136.93,161.12 137.04,160.88 137.14,160.64 137.25,160.41 137.36,160.17 137.48,159.93 137.59,159.69 137.71,159.45 137.83,159.21 137.96,158.97 138.09,158.73 138.22,158.48 138.35,158.24 138.49,158.00 138.63,157.75 138.77,157.51 138.92,157.27 139.07,157.02 139.22,156.78 139.38,156.53 139.54,156.28 139.71,156.04 139.87,155.79 140.05,155.55 140.22,155.30 140.40,155.06 140.58,154.81 140.77,154.57 140.96,154.33 141.15,154.08 141.35,153.84 141.55,153.60 141.76,153.36 141.97,153.12 142.18,152.88 142.39,152.65 142.61,152.41 142.84,152.18 143.06,151.94 143.29,151.71 143.53,151.48 143.76,151.26 144.00,151.03 144.25,150.81 144.49,150.59 144.74,150.37 145.00,150.15 145.25,149.94 145.51,149.73 145.77,149.52 146.04,149.32 146.31,149.11 146.58,148.91 146.85,148.71 147.13,148.52 147.40,148.33 147.68,148.14 147.96,147.96 148.25,147.78 148.54,147.60 148.82,147.42 149.11,147.25 149.40,147.08 149.70,146.92 149.99,146.76 150.29,146.60 150.59,146.45 150.88,146.30 151.18,146.16 151.48,146.01 151.79,145.88 152.09,145.74 152.39,145.61 152.69,145.48 153.00,145.36 153.30,145.24 153.60,145.13 153.91,145.02 154.21,144.91 154.51,144.81 154.82,144.71 155.12,144.61 155.42,144.52 155.72,144.43 156.03,144.35 156.33,144.27 156.63,144.19 156.92,144.12 157.22,144.05 157.52,143.98 157.81,143.92 158.11,143.86 158.40,143.80 158.69,143.75 158.98,143.70 159.27,143.66 159.56,143.61 159.84,143.57 160.12,143.54 160.41,143.50 160.69,143.47 160.96,143.44 161.24,143.42 161.51,143.40 161.79,143.38 162.06,143.36 162.33,143.34 162.60,143.33 162.86,143.32 163.13,143.31 163.39,143.30 163.65,143.30 163.91,143.30 164.17,143.30 164.43,143.30 164.68,143.30 164.94,143.30 165.19,143.31 165.44,143.32 165.70,143.32 165.95,143.33 166.20,143.35 166.45,143.36 166.71,143.37 166.96,143.38 167.21,143.40 167.47,143.41 167.72,143.43 167.98,143.45 168.24,143.46 168.51,143.48 168.77,143.50 169.04,143.52 169.31,143.53 169.59,143.55 169.87,143.57 170.16,143.58 170.46,143.60 170.76,143.61 171.07,143.62 171.38,143.63 171.71,143.64 172.04,143.64 172.38,143.65 172.74,143.64 173.10,143.64 173.48,143.62 173.86,143.61 174.26,143.58 174.67,143.55 175.09,143.50 175.53,143.45 175.97,143.39 176.43,143.31 176.90,143.23 177.37,143.12 177.86,143.01 178.34,142.88 178.84,142.73 179.33,142.57 179.83,142.39 180.32,142.20 180.81,141.99 181.29,141.77 181.76,141.53 182.23,141.28 182.68,141.03 183.12,140.76 183.54,140.49 183.95,140.21 184.34,139.93 184.71,139.64 185.07,139.36 185.42,139.07 185.74,138.79 186.06,138.51 186.36,138.23 186.64,137.95 186.91,137.68 187.17,137.42 187.42,137.15 187.66,136.90 187.89,136.65 188.11,136.40 188.32,136.16 188.52,135.92 188.72,135.69 188.91,135.46 189.10,135.23 189.28,135.01 189.46,134.79 189.63,134.58 189.80,134.37 189.97,134.16 190.14,133.95 190.30,133.74 190.47,133.54 190.63,133.34 190.79,133.14 190.95,132.94 191.11,132.75 191.28,132.55 191.44,132.36 191.60,132.17 191.76,131.97 191.93,131.78 192.09,131.59 192.26,131.40 192.43,131.21 192.60,131.02 192.77,130.83 192.94,130.64 193.12,130.45 193.30,130.26 193.48,130.07 193.66,129.88 193.85,129.69 194.04,129.50 194.23,129.32 194.43,129.13 194.62,128.94 194.82,128.75 195.03,128.57 195.23,128.38 195.44,128.20 195.66,128.01 195.87,127.83 196.09,127.64 196.32,127.46 196.54,127.28 196.77,127.10 197.01,126.92 197.24,126.74 197.49,126.56 197.73,126.39 197.98,126.21 198.23,126.04 198.48,125.87 198.74,125.70 199.00,125.53 199.26,125.37 199.53,125.20 199.80,125.04 200.07,124.88 200.35,124.73 200.63,124.57 200.91,124.42 201.20,124.27 201.48,124.12 201.78,123.98 202.07,123.83 202.37,123.69 202.66,123.56 202.97,123.42 203.27,123.29 203.58,123.17 203.88,123.04 204.19,122.92 204.51,122.80 204.82,122.69 205.14,122.58 205.46,122.47 205.78,122.37 206.10,122.27 206.42,122.17 206.74,122.08 207.07,121.99 207.40,121.91 207.72,121.83 208.05,121.75 208.38,121.67 208.71,121.60 209.04,121.54 209.37,121.48 209.70,121.42 210.03,121.36 210.36,121.31 210.69,121.27 211.02,121.23 211.35,121.19 211.68,121.15 212.01,121.12 212.34,121.09 212.67,121.07 213.00,121.05 213.32,121.04 213.65,121.02 213.97,121.02 214.29,121.01 214.62,121.01 214.94,121.01 215.25,121.02 215.57,121.03 215.89,121.04 216.20,121.06 216.51,121.08 216.82,121.10 217.13,121.13 217.43,121.16 217.74,121.19 218.04,121.22 218.33,121.26 218.63,121.30 218.92,121.35 219.22,121.39 219.50,121.44 219.79,121.49 220.07,121.54 220.36,121.60 220.63,121.66 220.91,121.72 221.18,121.78 221.46,121.85 221.72,121.91 221.99,121.98 222.25,122.05 222.51,122.12 222.77,122.20 223.03,122.27 223.28,122.35 223.53,122.43 223.78,122.51 224.03,122.59 224.28,122.67 224.52,122.76 224.76,122.84 225.00,122.93 225.24,123.01 225.48,123.10 225.72,123.19 225.95,123.28 226.19,123.37 226.42,123.47 226.66,123.56 226.89,123.66 227.13,123.75 227.36,123.85 227.60,123.95 227.84,124.04 228.08,124.14 228.32,124.25 228.56,124.35 228.81,124.45 229.06,124.56 229.32,124.66 229.58,124.77 229.84,124.88 230.11,124.99 230.39,125.10 230.67,125.21 230.96,125.32 231.26,125.43 231.57,125.54 231.89,125.66 232.22,125.77 232.56,125.88 232.91,125.99 233.28,126.10 233.66,126.21 234.05,126.31 234.45,126.41 234.87,126.51 235.31,126.59 235.76,126.68 236.22,126.75 236.70,126.81 237.18,126.87 237.68,126.91 238.19,126.94 238.71,126.95 239.23,126.95 239.76,126.94 240.29,126.90 240.82,126.86 241.35,126.80 241.87,126.72 242.38,126.63 242.89,126.53 243.38,126.41 243.87,126.29 244.34,126.15 244.79,126.01 245.23,125.86 245.66,125.70 246.07,125.54 246.46,125.38 246.84,125.21 247.21,125.05 247.56,124.88 247.90,124.71 248.22,124.55 248.54,124.38 248.84,124.21 249.14,124.05 249.42,123.89 249.69,123.73 249.96,123.57 250.22,123.42 250.47,123.26 250.72,123.11 250.96,122.96 251.20,122.82 251.43,122.67 251.66,122.53 251.89,122.38 252.11,122.24 252.33,122.10 252.55,121.97 252.77,121.83 252.99,121.69 253.20,121.56 253.42,121.43 253.64,121.30 253.85,121.16 254.07,121.03 254.29,120.91 254.50,120.78 254.72,120.65 254.94,120.53 255.17,120.40 255.39,120.28 255.61,120.15 255.84,120.03 256.07,119.91 256.30,119.79 256.54,119.67 256.77,119.55 257.01,119.43 257.25,119.32 257.49,119.20 257.74,119.09 257.99,118.97 258.24,118.86 258.50,118.75 258.75,118.65 259.01,118.54 259.28,118.44 259.54,118.33 259.81,118.23 260.08,118.13 260.36,118.04 260.64,117.94 260.92,117.85 261.20,117.76 261.49,117.67 261.78,117.58 262.07,117.50 262.36,117.42 262.66,117.34 262.96,117.26 263.26,117.19 263.56,117.12 263.87,117.06 264.18,116.99 264.49,116.93 264.80,116.87 265.12,116.82 265.44,116.77 265.76,116.72 266.08,116.68 266.40,116.63 266.73,116.60 267.05,116.56 267.38,116.53 267.71,116.51 268.04,116.48 268.37,116.46 268.70,116.45 269.04,116.44 269.37,116.43 269.71,116.43 270.04,116.43 270.38,116.43 270.71,116.44 271.05,116.45 271.39,116.47 271.72,116.48 272.06,116.51 272.40,116.54 272.73,116.57 273.07,116.60 273.40,116.64 273.74,116.68 274.07,116.73 274.40,116.78 274.73,116.84 275.06,116.89 275.39,116.95 275.72,117.02 276.04,117.09 276.37,117.16 276.69,117.24 277.01,117.32 277.33,117.40 277.65,117.49 277.96,117.58 278.27,117.67 278.58,117.76 278.89,117.86 279.20,117.96 279.50,118.07 279.80,118.18 280.10,118.29 280.39,118.40 280.69,118.52 280.98,118.63 281.26,118.76 281.55,118.88 281.83,119.00 282.10,119.13 282.38,119.26 282.65,119.39 282.92,119.53 283.18,119.66 283.45,119.80 283.71,119.94 283.96,120.08 284.21,120.22 284.46,120.36 284.71,120.51 284.95,120.66 285.19,120.80 285.43,120.95 285.66,121.10 285.90,121.25 286.12,121.40 286.35,121.56 286.57,121.71 286.79,121.86 287.01,122.02 287.22,122.17 287.43,122.33 287.64,122.49 287.85,122.64 288.05,122.80 288.25,122.96 288.46,123.12 288.65,123.28 288.85,123.44 289.05,123.60 289.24,123.76 289.43,123.93 289.63,124.09 289.82,124.25 290.01,124.42 290.20,124.59 290.39,124.75 290.58,124.92 290.78,125.09 290.97,125.26 291.16,125.44 291.36,125.61 291.56,125.79 291.76,125.97 291.97,126.15 292.18,126.33 292.39,126.52 292.61,126.71 292.83,126.90 293.06,127.10 293.29,127.30 293.54,127.50 293.79,127.70 294.05,127.91 294.32,128.12 294.60,128.34 294.89,128.55 295.19,128.78 295.51,129.00 295.83,129.22 296.18,129.45 296.54,129.67 296.91,129.90 297.30,130.12 297.71,130.35 298.13,130.56 298.57,130.78 299.02,130.98 299.48,131.18 299.96,131.37 300.45,131.54 300.95,131.71 301.46,131.86 301.97,131.99 302.49,132.11 303.01,132.22 303.52,132.31 304.04,132.39 304.55,132.45 305.05,132.49 305.54,132.52 306.02,132.54 306.50,132.55 306.96,132.54 307.40,132.53 307.84,132.51 308.26,132.48 308.66,132.44 309.06,132.40 309.44,132.35 309.81,132.30 310.16,132.25 310.51,132.19 310.85,132.13 311.17,132.07 311.49,132.01 311.80,131.95 312.10,131.89 312.39,131.83 312.67,131.76 312.95,131.70 313.23,131.64 313.50,131.57 313.76,131.51 314.03,131.45 314.29,131.39 314.54,131.33 314.79,131.27 315.05,131.21 315.30,131.15 315.54,131.10 315.79,131.04 316.04,130.99 316.29,130.93 316.53,130.88 316.78,130.83 317.03,130.78 317.28,130.73 317.53,130.68 317.78,130.63 318.03,130.59 318.28,130.54 318.53,130.50 318.79,130.46 319.05,130.42 319.30,130.38 319.56,130.34 319.83,130.31 320.09,130.28 320.36,130.25 320.63,130.22 320.90,130.19 321.17,130.17 321.45,130.14 321.72,130.12 322.00,130.11 322.29,130.09 322.57,130.08 322.86,130.07 323.14,130.06 323.43,130.06 323.73,130.06 324.02,130.06 324.32,130.06 324.62,130.07 324.92,130.08 325.22,130.10 325.52,130.11 325.83,130.13 326.13,130.16 326.44,130.19 326.75,130.22 327.06,130.25 327.38,130.29 327.69,130.33 328.00,130.38 328.32,130.43 328.64,130.48 328.95,130.54 329.27,130.60 329.59,130.66 329.91,130.73 330.23,130.80 330.55,130.88 330.87,130.96 331.19,131.04 331.51,131.13 331.83,131.22 332.15,131.31 332.47,131.41 332.78,131.52 333.10,131.62 333.42,131.73 333.73,131.85 334.05,131.97 334.36,132.09 334.68,132.21 334.99,132.34 335.30,132.48 335.60,132.61 335.91,132.75 336.22,132.90 336.52,133.04 336.82,133.19 337.12,133.35 337.42,133.51 337.71,133.67 338.00,133.83 338.29,134.00 338.58,134.16 338.86,134.34 339.15,134.51 339.42,134.69 339.70,134.87 339.97,135.05 340.24,135.24 340.51,135.43 340.78,135.62 341.04,135.81 341.29,136.00 341.55,136.20 341.80,136.40 342.05,136.60 342.29,136.80 342.53,137.01 342.77,137.21 343.00,137.42 343.23,137.62 343.46,137.83 343.68,138.04 343.90,138.26 344.12,138.47 344.33,138.68 344.54,138.90 344.74,139.11 344.95,139.33 345.14,139.54 345.34,139.76 345.53,139.97 345.72,140.19 345.90,140.41 346.08,140.63 346.26,140.84 346.44,141.06 346.61,141.28 346.77,141.50 346.94,141.71 347.10,141.93 347.26,142.15 347.42,142.36 347.57,142.58 347.72,142.80 347.87,143.01 348.01,143.23 348.16,143.45 348.30,143.66 348.44,143.88 348.57,144.09 348.71,144.31 348.84,144.52 348.98,144.74 349.11,144.96 349.24,145.17 349.36,145.39 349.49,145.61 349.62,145.83 349.75,146.05 349.87,146.27 350.00,146.49 350.13,146.72 350.25,146.94 350.38,147.17 350.51,147.40 350.64,147.63 350.78,147.87 350.91,148.11 351.05,148.35 351.19,148.60 351.34,148.85 351.49,149.11 351.65,149.37 351.81,149.64 351.97,149.91 352.15,150.19 352.33,150.47 352.52,150.76 352.72,151.06 352.93,151.36 353.15,151.67 353.38,151.99 353.63,152.31 353.88,152.64 354.16,152.97 354.45,153.31 354.75,153.65 355.07,153.99 355.40,154.33 355.76,154.68 356.12,155.01 356.51,155.35 356.91,155.68 357.32,156.00 357.74,156.32 358.18,156.62 358.62,156.91 359.08,157.18 359.54,157.44 360.00,157.69 360.46,157.92 360.92,158.13 361.38,158.33 361.83,158.51 362.28,158.68 362.72,158.83 363.15,158.97 363.57,159.10 363.99,159.21 364.39,159.32 364.78,159.41 365.16,159.49 365.53,159.57 365.89,159.64 366.24,159.70 366.59,159.76 366.92,159.81 367.24,159.86 367.56,159.90 367.86,159.94 368.16,159.98 368.46,160.01 368.75,160.04 369.03,160.07 369.31,160.10 369.58,160.13 369.85,160.16 370.12,160.19 370.38,160.21 370.64,160.24 370.90,160.26 371.15,160.29 371.41,160.32 371.66,160.34 371.91,160.37 372.16,160.40 372.42,160.43 372.67,160.46 372.92,160.49 373.17,160.53 373.42,160.56 373.67,160.60 373.92,160.63 374.17,160.67 374.43,160.71 374.68,160.76 374.94,160.80 375.19,160.85 375.45,160.90 375.71,160.95 375.97,161.00 376.23,161.06 376.50,161.12 376.76,161.18 377.03,161.24 377.29,161.31 377.56,161.38 377.83,161.45 378.10,161.53 378.37,161.61 378.65,161.69 378.92,161.77 379.20,161.86 379.47,161.95 379.75,162.05 380.03,162.15 380.31,162.25 380.59,162.36 380.87,162.47 381.15,162.58 381.43,162.70 381.71,162.82 382.00,162.94 382.28,163.07 382.56,163.20 382.84,163.34 383.13,163.47 383.41,163.62 383.69,163.76 383.98,163.92 384.26,164.07 384.54,164.23 384.82,164.39 385.10,164.56 385.38,164.73 385.66,164.90 385.94,165.08 386.21,165.26 386.49,165.44 386.76,165.63 387.03,165.82 387.30,166.02 387.57,166.22 387.84,166.42 388.10,166.63 388.36,166.83 388.63,167.05 388.88,167.26 389.14,167.48 389.39,167.70 389.64,167.93 389.89,168.16 390.14,168.39 390.38,168.62 390.62,168.86 390.86,169.10 391.09,169.34 391.33,169.58 391.55,169.83 391.78,170.07 392.00,170.33 392.22,170.58 392.43,170.83 392.64,171.09 392.85,171.35 393.06,171.61 393.26,171.87 393.46,172.13 393.65,172.39 393.84,172.66 394.03,172.92 394.21,173.19 394.39,173.46 394.56,173.73 394.73,174.00 394.90,174.27 395.06,174.54 395.22,174.81 395.38,175.08 395.53,175.35 395.68,175.62 395.83,175.89 395.97,176.17 396.10,176.44 396.24,176.71 396.37,176.98 396.49,177.25 396.62,177.52 396.74,177.79 396.85,178.05 396.96,178.32 397.07,178.59 397.18,178.85 397.28,179.12 397.38,179.38 397.47,179.65 397.57,179.91 397.66,180.17 397.74,180.43 397.83,180.69 397.91,180.94 397.99,181.20 398.06,181.46 398.14,181.71 398.21,181.96 398.28,182.22 398.34,182.47 398.41,182.72 398.47,182.97 398.53,183.22 398.59,183.46 398.65,183.71 398.70,183.96 398.76,184.21 398.81,184.45 398.86,184.70 398.91,184.95 398.96,185.20 399.01,185.44 399.06,185.69 399.11,185.94 399.15,186.20 399.20,186.45 399.25,186.71 399.30,186.97 399.34,187.23 399.39,187.49 399.44,187.76 399.49,188.04 399.55,188.31 399.60,188.60 399.66,188.88 399.72,189.18 399.78,189.48 399.85,189.79 399.92,190.10 400.00,190.43 400.08,190.76 400.17,191.10 400.27,191.45 400.37,191.81 400.48,192.18 400.60,192.56 400.74,192.95 400.88,193.34 401.04,193.75 401.20,194.17 401.39,194.59 401.59,195.02 401.80,195.46 402.03,195.90 402.27,196.34 402.54,196.78 402.81,197.22 403.11,197.66 403.41,198.09 403.73,198.51 404.07,198.92 404.41,199.33 404.76,199.72 405.12,200.09 405.49,200.45 405.85,200.80 406.22,201.13 406.59,201.44 406.96,201.73 407.33,202.01 407.69,202.28 408.04,202.53 408.39,202.76 408.74,202.99 409.08,203.19 409.41,203.39 409.73,203.58 410.04,203.76 410.35,203.93 410.65,204.09 410.95,204.24 411.23,204.39 411.52,204.53 411.79,204.66 412.06,204.79 412.32,204.92 412.58,205.04 412.84,205.16 413.09,205.28 413.34,205.39 413.58,205.50 413.83,205.61 414.06,205.72 414.30,205.83 414.54,205.94 414.77,206.05 415.00,206.16 415.23,206.27 415.46,206.37 415.69,206.48 415.91,206.59 416.14,206.70 416.37,206.81 416.59,206.93 416.82,207.04 417.05,207.16 417.27,207.28 417.50,207.40 417.73,207.52 417.95,207.64 418.18,207.77 418.41,207.90 418.64,208.03 418.86,208.16 419.09,208.30 419.32,208.44 419.55,208.58 419.78,208.73 420.01,208.88 420.24,209.03 420.47,209.18 420.71,209.34 420.94,209.50 421.17,209.67 421.40,209.83 421.63,210.00 421.86,210.18 422.10,210.36 422.33,210.54 422.56,210.72 422.79,210.91 423.02,211.11 423.25,211.30 423.48,211.50 423.71,211.71 423.93,211.91 424.16,212.13 424.39,212.34 424.61,212.56 424.83,212.78 425.06,213.01 425.28,213.23 425.49,213.47 425.71,213.70 425.93,213.94 426.14,214.18 426.35,214.43 426.56,214.68 426.77,214.93 426.98,215.19 427.18,215.45 427.38,215.71 427.58,215.98 427.78,216.24 427.97,216.52 428.16,216.79 428.35,217.07 428.54,217.35 428.72,217.63 428.90,217.91 429.07,218.20 429.25,218.49 429.41,218.78 429.58,219.07 429.74,219.37 429.90,219.66 430.06,219.96 430.21,220.26 430.36,220.57 430.51,220.87 430.65,221.17 430.79,221.48 430.92,221.79 431.05,222.10 431.18,222.40 431.30,222.71 431.42,223.03 431.53,223.34 431.64,223.65 431.75,223.96 431.86,224.27 431.95,224.59 432.05,224.90 432.14,225.21 432.23,225.52 432.31,225.83 432.39,226.14 432.47,226.46 432.54,226.77 432.61,227.08 432.68,227.38 432.74,227.69 432.80,228.00 432.85,228.30 432.90,228.61 432.95,228.91 432.99,229.21 433.03,229.51 433.07,229.81 433.10,230.11 433.13,230.41 433.16,230.70 433.18,230.99 433.20,231.28 433.22,231.57 433.24,231.86 433.25,232.14 433.26,232.42 433.27,232.70 433.27,232.98 433.27,233.26 433.27,233.54 433.27,233.81 433.26,234.08 433.25,234.35 433.24,234.62 433.23,234.88 433.22,235.14 433.20,235.41 433.19,235.67 433.17,235.92 433.14,236.18 433.12,236.44 433.10,236.69 433.07,236.94 433.04,237.20 433.02,237.45 432.99,237.70 432.96,237.95 432.92,238.20 432.89,238.45 432.86,238.70 432.82,238.95 432.79,239.21 432.75,239.46 432.71,239.71 432.67,239.97 432.63,240.23 432.60,240.49 432.56,240.76 432.52,241.02 432.48,241.30 432.44,241.57 432.40,241.86 432.36,242.14 432.32,242.44 432.28,242.74 432.24,243.05 432.21,243.37 432.17,243.69 432.14,244.03 432.11,244.37 432.09,244.73 432.07,245.10 432.05,245.48 432.04,245.87 432.03,246.27 432.04,246.69 432.05,247.12 432.07,247.56 432.10,248.01 432.14,248.48 432.19,248.96 432.26,249.44 432.34,249.93 432.44,250.43 432.55,250.94 432.67,251.45 432.82,251.96 432.97,252.46 433.15,252.96 433.33,253.46 433.53,253.95 433.75,254.43 433.97,254.89 434.20,255.34 434.44,255.78 434.69,256.21 434.94,256.61 435.19,257.01 435.45,257.38 435.70,257.74 435.96,258.09 436.21,258.42 436.46,258.73 436.71,259.03 436.96,259.32 437.20,259.60 437.44,259.86 437.67,260.12 437.91,260.36 438.13,260.60 438.35,260.83 438.57,261.05 438.79,261.26 439.00,261.47 439.21,261.67 439.41,261.87 439.61,262.06 439.81,262.25 440.01,262.44 440.20,262.63 440.39,262.81 440.58,262.99 440.77,263.17 440.96,263.35 441.14,263.52 441.32,263.70 441.51,263.88 441.69,264.05 441.87,264.23 442.04,264.41 442.22,264.59 442.40,264.77 442.58,264.95 442.75,265.13 442.93,265.32 443.11,265.50 443.28,265.69 443.46,265.88 443.63,266.07 443.80,266.27 443.98,266.46 444.15,266.66 444.32,266.87 444.49,267.07 444.66,267.28 444.84,267.49 445.01,267.70 445.18,267.92 445.34,268.14 445.51,268.36 445.68,268.59 445.84,268.82 446.01,269.05 446.17,269.28 446.34,269.52 446.50,269.76 446.66,270.01 446.82,270.26 446.98,270.51 447.13,270.77 447.29,271.02 447.44,271.29 447.59,271.55 447.74,271.82 447.89,272.09 448.03,272.37 448.17,272.64 448.31,272.92 448.45,273.21 448.59,273.49 448.72,273.78 448.85,274.08 448.98,274.37 449.10,274.67 449.23,274.97 449.34,275.27 449.46,275.58 449.57,275.89 449.68,276.20 449.79,276.51 449.89,276.82 450.00,277.14 450.09,277.46 450.19,277.78 450.28,278.10 450.36,278.42 450.44,278.75 450.52,279.07 450.60,279.40 450.67,279.73 450.74,280.06 450.80,280.39 450.86,280.72 450.92,281.06 450.97,281.39 451.02,281.72 451.06,282.06 451.11,282.39 451.14,282.72 451.18,283.06 451.20,283.39 451.23,283.73 451.25,284.06 451.27,284.39 451.28,284.73 451.29,285.06 451.30,285.39 451.30,285.72 451.30,286.05 451.29,286.38 451.28,286.71 451.27,287.03 451.26,287.36 451.24,287.68 451.21,288.00 451.18,288.32 451.15,288.64 451.12,288.95 451.08,289.27 451.04,289.58 451.00,289.89 450.95,290.20 450.91,290.50 450.85,290.81 450.80,291.11 450.74,291.41 450.68,291.70 450.62,292.00 450.55,292.29 450.48,292.57 450.41,292.86 450.34,293.14 450.26,293.42 450.18,293.70 450.10,293.98 450.02,294.25 449.94,294.52 449.85,294.78 449.76,295.05 449.68,295.31 449.58,295.57 449.49,295.82 449.40,296.08 449.30,296.33 449.21,296.57 449.11,296.82 449.01,297.06 448.91,297.30 448.81,297.54 448.70,297.78 448.60,298.02 448.49,298.25 448.39,298.48 448.28,298.71 448.17,298.94 448.06,299.17 447.95,299.40 447.84,299.62 447.73,299.85 447.62,300.08 447.50,300.30 447.39,300.53 447.27,300.76 447.15,300.99 447.04,301.21 446.92,301.45 446.79,301.68 446.67,301.92 446.55,302.16 446.42,302.40 446.30,302.64 446.17,302.90 446.04,303.15 445.91,303.42 445.77,303.68 445.64,303.96 445.50,304.24 445.37,304.54 445.23,304.84 445.09,305.15 444.95,305.47 444.81,305.81 444.67,306.15 444.53,306.51 444.39,306.89 444.26,307.27 444.13,307.68 444.00,308.09 443.88,308.52 443.76,308.97 443.65,309.43 443.55,309.90 443.46,310.39 443.39,310.89 443.32,311.40 443.27,311.92 443.23,312.44 443.21,312.97" fill="none" stroke="#00ffff" stroke-width="1"/>
<rect x="443" y="313" width="9" height="1" fill="#00ffff"/>
<circle cx="250.75" cy="313.5" r="166.0" fill="none" stroke="#ff00ff" stroke-width="1"/>
<circle cx="377.4876997975342" cy="292.29138264690295" r="13.5" fill="none" stroke="#ffff00" stroke-width="1"/>
<circle cx="377.4876997975342" cy="292.29138264690295" r="27.5" fill="none" stroke="#ffff00" stroke-width="1"/>
<circle cx="382.6876997975342" cy="292.29138264690295" r="32.5" fill="none" stroke="#00ffff" stroke-width="1"/>
<circle cx="355.363844108787" cy="388.1203298088558" r="13.5" fill="none" stroke="#ffff00" stroke-width="1"/>
<circle cx="355.363844108787" cy="388.1203298088558" r="27.5" fill="none" stroke="#ffff00" stroke-width="1"/>
<circle cx="360.563844108787" cy="388.1203298088558" r="32.5" fill="none" stroke="#00ffff" stroke-width="1"/>
<circle cx="271.95861735309705" cy="440.2376997975342" r="13.5" fill="none" stroke="#ffff00" stroke-width="1"/>
<circle cx="271.95861735309705" cy="440.2376997975342" r="27.5" fill="none" stroke="#ffff00" stroke-width="1"/>
<circle cx="277.15861735309704" cy="440.2376997975342" r="32.5" fill="none" stroke="#00ffff" stroke-width="1"/>
<circle cx="176.12967019114424" cy="418.113844108787" r="13.5" fill="none" stroke="#ffff00" stroke-width="1"/>
<circle cx="176.12967019114424" cy="418.113844108787" r="27.5" fill="none" stroke="#ffff00" stroke-width="1"/>
<circle cx="181.32967019114423" cy="418.113844108787" r="32.5" fill="none" stroke="#00ffff" stroke-width="1"/>
<circle cx="124.01230020246577" cy="334.70861735309705" r="13.5" fill="none" stroke="#ffff00" stroke-width="1"/>
<circle cx="124.01230020246577" cy="334.70861735309705" r="27.5" fill="none" stroke="#ffff00" stroke-width="1"/>
<circle cx="129.21230020246577" cy="334.70861735309705" r="32.5" fill="none" stroke="#00ffff" stroke-width="1"/>
<circle cx="146.13615589121298" cy="238.87967019114424" r="13.5" fill="none" stroke="#ffff00" stroke-width="1"/>
<circle cx="146.13615589121298" cy="238.87967019114424" r="27.5" fill="none" stroke="#ffff00" stroke-width="1"/>
<circle cx="151.33615589121297" cy="238.87967019114424" r="32.5" fill="none" stroke="#00ffff" stroke-width="1"/>
<circle cx="229.54138264690297" cy="186.76230020246578" r="13.5" fill="none" stroke="#ffff00" stroke-width="1"/>
<circle cx="229.54138264690297" cy="186.76230020246578" r="27.5" fill="none" stroke="#ffff00" stroke-width="1"/>
<circle cx="234.74138264690296" cy="186.76230020246578" r="32.5" fill="none" stroke="#00ffff" stroke-width="1"/>
<circle cx="325.3703298088558" cy="208.886155891213" r="13.5" fill="none" stroke="#ffff00" stroke-width="1"/>
<circle cx="325.3703298088558" cy="208.886155891213" r="27.5" fill="none" stroke="#ffff00" stroke-width="1"/>
<circle cx="330.5703298088558" cy="208.886155891213" r="32.5" fill="none" stroke="#00ffff" stroke-width="1"/>
<circle cx="250.75" cy="313.5" r="68.0" fill="none" stroke="#ff00ff" stroke-width="1"/>
<circle cx="255.95" cy="313.5" r="62.0" fill="none" stroke="#00ffff" stroke-width="1"/>
<circle cx="250.75" cy="313.5" r="53.5" fill="none" stroke="#ff00ff" stroke-width="1"/>
<circle cx="250.75" cy="313.5" r="47.8" fill="none" stroke="#ff00ff" stroke-width="1"/>
<circle cx="250.75" cy="313.5" r="42.7" fill="none" stroke="#ff00ff" stroke-width="1"/>
<circle cx="255.95" cy="313.5" r="29.5" fill="none" stroke="#00ff00" stroke-width="1"/>
<circle cx="250.75" cy="313.5" r="19.6" fill="none" stroke="#00ff00" stroke-width="1"/>
<path clip-path="url(#c1)" d="M511 97L540 68M523 97L552 68M535 97L564 68M546 97L575 68M558 97L587 68M569 97L598 68M581 97L610 68M593 97L622 68" stroke="#ffff00" stroke-width="1" fill="none"/>
<path clip-path="url(#c2)" d="M426 240L546 120M438 240L558 120M450 240L570 120M461 240L581 120M473 240L593 120M484 240L604 120M496 240L616 120M508 240L628 120M519 240L639 120M531 240L651 120M542 240L662 120M554 240L674 120M566 240L686 120M577 240L697 120M589 240L709 120" stroke="#ffff00" stroke-width="1" fill="none"/>
<path clip-path="url(#c3)" d="M521 268L550 239M527 268L556 239M532 268L561 239M538 268L567 239M544 268L573 239M550 268L579 239M556 268L585 239M561 268L590 239M567 268L596 239M573 268L602 239M579 268L608 239M585 268L614 239" stroke="#ffff00" stroke-width="1" fill="none"/>
<path clip-path="url(#c4)" d="M519 264L549 294M525 264L555 294M531 264L561 294M537 264L567 294M542 264L572 294M548 264L578 294M554 264L584 294M560 264L590 294M566 264L596 294M571 264L601 294M577 264L607 294M583 264L613 294M589 264L619 294" stroke="#ffff00" stroke-width="1" fill="none"/>
<path clip-path="url(#c5)" d="M605 97L634 68M617 97L646 68M629 97L658 68M641 97L670 68M653 97L682 68M665 97L694 68M677 97L706 68M689 97L718 68" stroke="#ffff00" stroke-width="1" fill="none"/>
<path clip-path="url(#c6)" d="M632 130L642 120M644 130L654 120M656 130L666 120M668 130L678 120M680 130L690 120M692 130L702 120" stroke="#ffff00" stroke-width="1" fill="none"/>
<path clip-path="url(#c7)" d="M540 68L684 212M581 68L725 212M621 68L765 212M662 68L806 212M702 68L846 212M743 68L887 212M783 68L927 212M824 68L968 212M864 68L1008 212" stroke="#ffff00" stroke-width="1" fill="none"/>
<path clip-path="url(#c8)" d="M583 158L597 172M590 158L604 172M596 158L610 172M603 158L617 172M610 158L624 172M617 158L631 172M623 158L637 172M630 158L644 172M637 158L651 172M643 158L657 172" stroke="#ffff00" stroke-width="1" fill="none"/>
<path clip-path="url(#c9)" d="M611 172L636 147M622 172L647 147M633 172L658 147M644 172L669 147M655 172L680 147M666 172L691 147M677 172L702 147" stroke="#ffff00" stroke-width="1" fill="none"/>
<path clip-path="url(#c10)" d="M584 199L599 214M591 199L606 214M597 199L612 214M604 199L619 214M611 199L626 214M617 199L632 214M624 199L639 214M631 199L646 214M637 199L652 214" stroke="#ffff00" stroke-width="1" fill="none"/>
<path clip-path="url(#c11)" d="M569 266L636 199M580 266L647 199M591 266L658 199M602 266L669 199M613 266L680 199M624 266L691 199M635 266L702 199M646 266L713 199M657 266L724 199M668 266L735 199M679 266L746 199" stroke="#ffff00" stroke-width="1" fill="none"/>
<path clip-path="url(#c12)" d="M627 281L643 265M632 281L648 265M637 281L653 265M643 281L659 265M649 281L665 265M654 281L670 265M659 281L675 265M665 281L681 265M671 281L687 265" stroke="#ffff00" stroke-width="1" fill="none"/>
<path clip-path="url(#c13)" d="M623 277L640 294M629 277L646 294M635 277L652 294M640 277L657 294M645 277L662 294M651 277L668 294M657 277L674 294M662 277L679 294M667 277L684 294" stroke="#ffff00" stroke-width="1" fill="none"/>
<path clip-path="url(#c14)" d="M659 271L671 259M670 271L682 259M681 271L693 259M692 271L704 259M703 271L715 259M714 271L726 259M725 271L737 259M736 271L748 259M747 271L759 259M758 271L770 259M769 271L781 259M780 271L792 259M791 271L803 259M802 271L814 259M813 271L825 259M824 271L836 259M835 271L847 259M846 271L858 259M857 271L869 259M868 271L880 259M879 271L891 259M890 271L902 259M901 271L913 259M912 271L924 259M923 271L935 259" stroke="#ffff00" stroke-width="1" fill="none"/>
<path clip-path="url(#c15)" d="M665 232L686 211M672 232L693 211M678 232L699 211M684 232L705 211M691 232L712 211M698 232L719 211M704 232L725 211M710 232L731 211M717 232L738 211M724 232L745 211M730 232L751 211" stroke="#ffff00" stroke-width="1" fill="none"/>
<path clip-path="url(#c16)" d="M663 260L686 237M670 260L693 237M676 260L699 237M682 260L705 237M689 260L712 237M696 260L719 237M702 260L725 237M708 260L731 237M715 260L738 237M722 260L745 237M728 260L751 237M734 260L757 237M741 260L764 237" stroke="#ffff00" stroke-width="1" fill="none"/>
<path clip-path="url(#c17)" d="M762 232L783 211M769 232L790 211M776 232L797 211M782 232L803 211M788 232L809 211M795 232L816 211M802 232L823 211M808 232L829 211M814 232L835 211M821 232L842 211M828 232L849 211" stroke="#ffff00" stroke-width="1" fill="none"/>
<path clip-path="url(#c18)" d="M741 260L764 237M748 260L771 237M754 260L777 237M760 260L783 237M767 260L790 237M774 260L797 237M780 260L803 237M786 260L809 237M793 260L816 237M800 260L823 237M806 260L829 237M812 260L835 237M819 260L842 237M826 260L849 237" stroke="#ffff00" stroke-width="1" fill="none"/>
<rect x="546" y="67" width="3" height="225" fill="#ff0000"/>
<rect x="586" y="67" width="3" height="225" fill="#ff0000"/>
<rect x="546" y="67" width="43" height="3" fill="#ff0000"/>
<rect x="546" y="95" width="43" height="3" fill="#ff0000"/>
<rect x="586" y="94" width="55" height="3" fill="#ff0000"/>
<rect x="639" y="95" width="44" height="3" fill="#ff0000"/>
<rect x="546" y="119" width="43" height="3" fill="#ff0000"/>
<rect x="586" y="121" width="55" height="3" fill="#ff0000"/>
<rect x="639" y="119" width="44" height="3" fill="#ff0000"/>
<rect x="546" y="238" width="43" height="3" fill="#ff0000"/>
<rect x="535" y="292" width="62" height="3" fill="#ff0000"/>
<rect x="634" y="292" width="35" height="3" fill="#ff0000"/>
<rect x="639" y="67" width="3" height="64" fill="#ff0000"/>
<rect x="639" y="67" width="190" height="3" fill="#ff0000"/>
<rect x="639" y="128" width="44" height="3" fill="#ff0000"/>
<rect x="682" y="67" width="3" height="191" fill="#ff0000"/>
<rect x="826" y="67" width="3" height="191" fill="#ff0000"/>
<rect x="682" y="210" width="147" height="3" fill="#ff0000"/>
<rect x="595" y="121" width="3" height="28" fill="#ff0000"/>
<rect x="595" y="157" width="3" height="157" fill="#ff0000"/>
<rect x="631" y="121" width="3" height="37" fill="#ff0000"/>
<rect x="595" y="157" width="46" height="3" fill="#ff0000"/>
<rect x="639" y="146" width="42" height="3" fill="#ff0000"/>
<rect x="639" y="146" width="3" height="25" fill="#ff0000"/>
<rect x="678" y="146" width="3" height="115" fill="#ff0000"/>
<rect x="595" y="170" width="86" height="3" fill="#ff0000"/>
<rect x="595" y="198" width="86" height="3" fill="#ff0000"/>
<rect x="676" y="170" width="4" height="31" fill="#ff0000"/>
<rect x="596" y="170" width="3" height="31" fill="#ff0000"/>
<rect x="599" y="185" width="77" height="1" fill="#ffff00"/>
<rect x="639" y="198" width="3" height="94" fill="#ff0000"/>
<rect x="595" y="212" width="46" height="3" fill="#ff0000"/>
<rect x="639" y="264" width="32" height="3" fill="#ff0000"/>
<rect x="668" y="264" width="3" height="50" fill="#ff0000"/>
<rect x="645.5" y="271.5" width="19" height="14" rx="2" fill="#000" stroke="#ff0000" stroke-width="3"/>
<rect x="642" y="274" width="2" height="9" fill="#000"/>
<rect x="666" y="274" width="2" height="9" fill="#000"/>
<rect x="643" y="279" width="23" height="1" fill="#ffff00"/>
<rect x="678" y="258" width="247" height="3" fill="#ff0000"/>
<rect x="668" y="269" width="257" height="3" fill="#ff0000"/>
<rect x="922" y="258" width="3" height="56" fill="#ff0000"/>
<rect x="549" y="85" width="279" height="1" fill="#ffff00"/>
<rect x="549" y="108" width="134" height="1" fill="#ffff00"/>
<circle cx="566.7" cy="266.3" r="16.6" fill="#000" stroke="#ff0000" stroke-width="3"/>
<line x1="558" y1="266.5" x2="577" y2="266.5" stroke="#ffff00" stroke-width="1"/>
<line x1="567.5" y1="257" x2="567.5" y2="276" stroke="#ffff00" stroke-width="1"/>
<polyline points="728.5,212 728.5,220 686,230 683.5,230" fill="none" stroke="#ff0000" stroke-width="3" stroke-linejoin="miter" stroke-miterlimit="2"/>
<polygon points="687,232.5 728.5,221.5 731,242 691,250.5" fill="#000"/>
<polygon points="687,232.5 728.5,221.5 731,242 691,250.5" fill="none" stroke="#ff0000" stroke-width="3" stroke-linejoin="miter" stroke-miterlimit="2"/>
<line x1="686" y1="242.5" x2="731.5" y2="231.3" stroke="#ffff00" stroke-width="1"/>
<polyline points="687.5,259 687.5,252.5 691,252 731,243.5" fill="none" stroke="#ff0000" stroke-width="3" stroke-linejoin="miter" stroke-miterlimit="2"/>
<polyline points="731,242 731,237.5 742.5,237.5 742.5,259" fill="none" stroke="#ff0000" stroke-width="3" stroke-linejoin="miter" stroke-miterlimit="2"/>
<polyline points="781.5,212 781.5,220 824,230 826.5,230" fill="none" stroke="#ff0000" stroke-width="3" stroke-linejoin="miter" stroke-miterlimit="2"/>
<polygon points="823,232.5 781.5,221.5 779,242 819,250.5" fill="#000"/>
<polygon points="823,232.5 781.5,221.5 779,242 819,250.5" fill="none" stroke="#ff0000" stroke-width="3" stroke-linejoin="miter" stroke-miterlimit="2"/>
<line x1="824" y1="242.5" x2="778.5" y2="231.3" stroke="#ffff00" stroke-width="1"/>
<polyline points="822.5,259 822.5,252.5 819,252 779,243.5" fill="none" stroke="#ff0000" stroke-width="3" stroke-linejoin="miter" stroke-miterlimit="2"/>
<polyline points="779,242 779,237.5 767.5,237.5 767.5,259" fill="none" stroke="#ff0000" stroke-width="3" stroke-linejoin="miter" stroke-miterlimit="2"/>
<path clip-path="url(#c19)" d="M512 560L541 531M524 560L553 531M536 560L565 531M547 560L576 531M559 560L588 531M570 560L599 531M582 560L611 531M594 560L623 531" stroke="#ffff00" stroke-width="1" fill="none"/>
<path clip-path="url(#c20)" d="M425 508L545 388M437 508L557 388M448 508L568 388M460 508L580 388M472 508L592 388M483 508L603 388M495 508L615 388M506 508L626 388M518 508L638 388M530 508L650 388M541 508L661 388M553 508L673 388M564 508L684 388M576 508L696 388M588 508L708 388" stroke="#ffff00" stroke-width="1" fill="none"/>
<path clip-path="url(#c21)" d="M517 360L546 389M522 360L551 389M528 360L557 389M534 360L563 389M540 360L569 389M546 360L575 389M551 360L580 389M557 360L586 389M563 360L592 389M569 360L598 389M575 360L604 389M580 360L609 389M586 360L615 389" stroke="#ffff00" stroke-width="1" fill="none"/>
<path clip-path="url(#c22)" d="M518 364L548 334M523 364L553 334M529 364L559 334M535 364L565 334M541 364L571 334M547 364L577 334M552 364L582 334M558 364L588 334M564 364L594 334M570 364L600 334M576 364L606 334M581 364L611 334M587 364L617 334" stroke="#ffff00" stroke-width="1" fill="none"/>
<path clip-path="url(#c23)" d="M610 560L639 531M622 560L651 531M634 560L663 531M646 560L675 531M658 560L687 531M670 560L699 531M682 560L711 531" stroke="#ffff00" stroke-width="1" fill="none"/>
<path clip-path="url(#c24)" d="M626 508L636 498M638 508L648 498M650 508L660 498M662 508L672 498M674 508L684 498M686 508L696 498" stroke="#ffff00" stroke-width="1" fill="none"/>
<path clip-path="url(#c25)" d="M542 416L686 560M582 416L726 560M623 416L767 560M664 416L808 560M704 416L848 560M744 416L888 560M785 416L929 560M826 416L970 560" stroke="#ffff00" stroke-width="1" fill="none"/>
<path clip-path="url(#c26)" d="M580 456L594 470M586 456L600 470M593 456L607 470M600 456L614 470M606 456L620 470M613 456L627 470M620 456L634 470M626 456L640 470M633 456L647 470M640 456L654 470" stroke="#ffff00" stroke-width="1" fill="none"/>
<path clip-path="url(#c27)" d="M610 481L635 456M621 481L646 456M632 481L657 456M643 481L668 456M654 481L679 456M665 481L690 456M676 481L701 456M687 481L712 456" stroke="#ffff00" stroke-width="1" fill="none"/>
<path clip-path="url(#c28)" d="M584 414L599 429M591 414L606 429M598 414L613 429M605 414L620 429M611 414L626 429M618 414L633 429M625 414L640 429M631 414L646 429M638 414L653 429" stroke="#ffff00" stroke-width="1" fill="none"/>
<path clip-path="url(#c29)" d="M571 429L638 362M582 429L649 362M593 429L660 362M604 429L671 362M615 429L682 362M626 429L693 362M637 429L704 362M648 429L715 362M659 429L726 362M670 429L737 362M681 429L748 362" stroke="#ffff00" stroke-width="1" fill="none"/>
<path clip-path="url(#c30)" d="M626 346L642 362M632 346L648 362M638 346L654 362M643 346L659 362M648 346L664 362M654 346L670 362M660 346L676 362M665 346L681 362M670 346L686 362" stroke="#ffff00" stroke-width="1" fill="none"/>
<path clip-path="url(#c31)" d="M624 350L641 333M629 350L646 333M634 350L651 333M640 350L657 333M646 350L663 333M651 350L668 333M656 350L673 333M662 350L679 333M668 350L685 333" stroke="#ffff00" stroke-width="1" fill="none"/>
<path clip-path="url(#c32)" d="M661 368L673 356M672 368L684 356M683 368L695 356M694 368L706 356M705 368L717 356M716 368L728 356M727 368L739 356M738 368L750 356M749 368L761 356M760 368L772 356M771 368L783 356M782 368L794 356M793 368L805 356M804 368L816 356M815 368L827 356M826 368L838 356M837 368L849 356M848 368L860 356M859 368L871 356M870 368L882 356M881 368L893 356M892 368L904 356M903 368L915 356M914 368L926 356M925 368L937 356" stroke="#ffff00" stroke-width="1" fill="none"/>
<path clip-path="url(#c33)" d="M662 417L683 396M669 417L690 396M675 417L696 396M681 417L702 396M688 417L709 396M695 417L716 396M701 417L722 396M707 417L728 396M714 417L735 396M721 417L742 396M727 417L748 396" stroke="#ffff00" stroke-width="1" fill="none"/>
<path clip-path="url(#c34)" d="M662 391L685 368M669 391L692 368M675 391L698 368M681 391L704 368M688 391L711 368M695 391L718 368M701 391L724 368M707 391L730 368M714 391L737 368M721 391L744 368M727 391L750 368M733 391L756 368M740 391L763 368M747 391L770 368" stroke="#ffff00" stroke-width="1" fill="none"/>
<path clip-path="url(#c35)" d="M759 417L780 396M766 417L787 396M773 417L794 396M779 417L800 396M785 417L806 396M792 417L813 396M799 417L820 396M805 417L826 396M811 417L832 396M818 417L839 396M825 417L846 396" stroke="#ffff00" stroke-width="1" fill="none"/>
<path clip-path="url(#c36)" d="M747 391L770 368M753 391L776 368M759 391L782 368M766 391L789 368M773 391L796 368M779 391L802 368M785 391L808 368M792 391L815 368M799 391L822 368M805 391L828 368M811 391L834 368M818 391L841 368M825 391L848 368" stroke="#ffff00" stroke-width="1" fill="none"/>
<rect x="546" y="336" width="3" height="225" fill="#ff0000"/>
<rect x="586" y="336" width="3" height="225" fill="#ff0000"/>
<rect x="546" y="558" width="43" height="3" fill="#ff0000"/>
<rect x="546" y="530" width="43" height="3" fill="#ff0000"/>
<rect x="586" y="531" width="55" height="3" fill="#ff0000"/>
<rect x="639" y="530" width="44" height="3" fill="#ff0000"/>
<rect x="546" y="506" width="43" height="3" fill="#ff0000"/>
<rect x="586" y="504" width="55" height="3" fill="#ff0000"/>
<rect x="639" y="506" width="44" height="3" fill="#ff0000"/>
<rect x="546" y="387" width="43" height="3" fill="#ff0000"/>
<rect x="535" y="333" width="62" height="3" fill="#ff0000"/>
<rect x="634" y="333" width="35" height="3" fill="#ff0000"/>
<rect x="639" y="497" width="3" height="64" fill="#ff0000"/>
<rect x="639" y="558" width="190" height="3" fill="#ff0000"/>
<rect x="639" y="497" width="44" height="3" fill="#ff0000"/>
<rect x="682" y="370" width="3" height="191" fill="#ff0000"/>
<rect x="826" y="370" width="3" height="191" fill="#ff0000"/>
<rect x="682" y="415" width="147" height="3" fill="#ff0000"/>
<rect x="595" y="314" width="3" height="193" fill="#ff0000"/>
<rect x="631" y="470" width="3" height="37" fill="#ff0000"/>
<rect x="595" y="468" width="46" height="3" fill="#ff0000"/>
<rect x="639" y="479" width="42" height="3" fill="#ff0000"/>
<rect x="639" y="457" width="3" height="25" fill="#ff0000"/>
<rect x="678" y="367" width="3" height="115" fill="#ff0000"/>
<rect x="595" y="455" width="86" height="3" fill="#ff0000"/>
<rect x="595" y="427" width="86" height="3" fill="#ff0000"/>
<rect x="676" y="427" width="4" height="31" fill="#ff0000"/>
<rect x="596" y="427" width="3" height="31" fill="#ff0000"/>
<rect x="599" y="442" width="77" height="1" fill="#ffff00"/>
<rect x="639" y="336" width="3" height="94" fill="#ff0000"/>
<rect x="595" y="413" width="46" height="3" fill="#ff0000"/>
<rect x="639" y="360" width="32" height="3" fill="#ff0000"/>
<rect x="668" y="313" width="3" height="50" fill="#ff0000"/>
<rect x="645.5" y="341.5" width="19" height="14" rx="2" fill="#000" stroke="#ff0000" stroke-width="3"/>
<rect x="642" y="344" width="2" height="9" fill="#000"/>
<rect x="666" y="344" width="2" height="9" fill="#000"/>
<rect x="643" y="347" width="23" height="1" fill="#ffff00"/>
<rect x="678" y="366" width="247" height="3" fill="#ff0000"/>
<rect x="668" y="355" width="257" height="3" fill="#ff0000"/>
<rect x="922" y="313" width="3" height="56" fill="#ff0000"/>
<rect x="549" y="542" width="279" height="1" fill="#ffff00"/>
<rect x="549" y="519" width="134" height="1" fill="#ffff00"/>
<circle cx="566.7" cy="361.7" r="16.6" fill="#000" stroke="#ff0000" stroke-width="3"/>
<line x1="558" y1="361.5" x2="577" y2="361.5" stroke="#ffff00" stroke-width="1"/>
<line x1="567.5" y1="371" x2="567.5" y2="352" stroke="#ffff00" stroke-width="1"/>
<polyline points="728.5,416 728.5,408 686,398 683.5,398" fill="none" stroke="#ff0000" stroke-width="3" stroke-linejoin="miter" stroke-miterlimit="2"/>
<polygon points="687,395.5 728.5,406.5 731,386 691,377.5" fill="#000"/>
<polygon points="687,395.5 728.5,406.5 731,386 691,377.5" fill="none" stroke="#ff0000" stroke-width="3" stroke-linejoin="miter" stroke-miterlimit="2"/>
<line x1="686" y1="385.5" x2="731.5" y2="396.7" stroke="#ffff00" stroke-width="1"/>
<polyline points="687.5,369 687.5,375.5 691,376 731,384.5" fill="none" stroke="#ff0000" stroke-width="3" stroke-linejoin="miter" stroke-miterlimit="2"/>
<polyline points="731,386 731,390.5 742.5,390.5 742.5,369" fill="none" stroke="#ff0000" stroke-width="3" stroke-linejoin="miter" stroke-miterlimit="2"/>
<polyline points="781.5,416 781.5,408 824,398 826.5,398" fill="none" stroke="#ff0000" stroke-width="3" stroke-linejoin="miter" stroke-miterlimit="2"/>
<polygon points="823,395.5 781.5,406.5 779,386 819,377.5" fill="#000"/>
<polygon points="823,395.5 781.5,406.5 779,386 819,377.5" fill="none" stroke="#ff0000" stroke-width="3" stroke-linejoin="miter" stroke-miterlimit="2"/>
<line x1="824" y1="385.5" x2="778.5" y2="396.7" stroke="#ffff00" stroke-width="1"/>
<polyline points="822.5,369 822.5,375.5 819,376 779,384.5" fill="none" stroke="#ff0000" stroke-width="3" stroke-linejoin="miter" stroke-miterlimit="2"/>
<polyline points="779,386 779,390.5 767.5,390.5 767.5,369" fill="none" stroke="#ff0000" stroke-width="3" stroke-linejoin="miter" stroke-miterlimit="2"/>
<path clip-path="url(#c37)" d="M572 148L598 122M582 148L608 122M592 148L618 122M602 148L628 122M612 148L638 122M622 148L648 122M632 148L658 122" stroke="#ffff00" stroke-width="1" fill="none"/>
<path clip-path="url(#c38)" d="M563 247L597 213M573 247L607 213M583 247L617 213M593 247L627 213M603 247L637 213M613 247L647 213M623 247L657 213M633 247L667 213" stroke="#ffff00" stroke-width="1" fill="none"/>
<path clip-path="url(#c39)" d="M578 264L596 246M583 264L601 246M588 264L606 246M594 264L612 246M600 264L618 246M605 264L623 246M610 264L628 246M616 264L634 246M622 264L640 246M627 264L645 246M632 264L650 246" stroke="#ffff00" stroke-width="1" fill="none"/>
<path clip-path="url(#c40)" d="M579 260L598 279M584 260L603 279M590 260L609 279M596 260L615 279M601 260L620 279M606 260L625 279M612 260L631 279M618 260L637 279M623 260L642 279M628 260L647 279M634 260L653 279" stroke="#ffff00" stroke-width="1" fill="none"/>
<rect x="595" y="121" width="39" height="3" fill="#ff0000"/>
<rect x="595" y="146" width="39" height="3" fill="#ff0000"/>
<rect x="595" y="212" width="39" height="3" fill="#ff0000"/>
<rect x="595" y="245" width="39" height="3" fill="#ff0000"/>
<rect x="595" y="277" width="39" height="3" fill="#ff0000"/>
<rect x="602.5" y="253.5" width="24" height="17" rx="2" fill="#000" stroke="#ff0000" stroke-width="3"/>
<rect x="598" y="257" width="3" height="10" fill="#000"/>
<rect x="628" y="257" width="3" height="10" fill="#000"/>
<rect x="599" y="262" width="27" height="1" fill="#ffff00"/>
<path clip-path="url(#c41)" d="M574 496L600 470M584 496L610 470M594 496L620 470M604 496L630 470M614 496L640 470M624 496L650 470M634 496L660 470" stroke="#ffff00" stroke-width="1" fill="none"/>
<path clip-path="url(#c42)" d="M565 405L599 371M575 405L609 371M585 405L619 371M595 405L629 371M605 405L639 371M615 405L649 371M625 405L659 371M635 405L669 371" stroke="#ffff00" stroke-width="1" fill="none"/>
<path clip-path="url(#c43)" d="M580 354L598 372M585 354L603 372M590 354L608 372M596 354L614 372M602 354L620 372M607 354L625 372M612 354L630 372M618 354L636 372M624 354L642 372M629 354L647 372M634 354L652 372" stroke="#ffff00" stroke-width="1" fill="none"/>
<path clip-path="url(#c44)" d="M577 358L596 339M582 358L601 339M588 358L607 339M594 358L613 339M599 358L618 339M604 358L623 339M610 358L629 339M616 358L635 339M621 358L640 339M626 358L645 339M632 358L651 339" stroke="#ffff00" stroke-width="1" fill="none"/>
<rect x="595" y="494" width="39" height="3" fill="#ff0000"/>
<rect x="595" y="469" width="39" height="3" fill="#ff0000"/>
<rect x="595" y="403" width="39" height="3" fill="#ff0000"/>
<rect x="595" y="370" width="39" height="3" fill="#ff0000"/>
<rect x="595" y="338" width="39" height="3" fill="#ff0000"/>
<rect x="602.5" y="347.5" width="24" height="17" rx="2" fill="#000" stroke="#ff0000" stroke-width="3"/>
<rect x="598" y="351" width="3" height="10" fill="#000"/>
<rect x="628" y="351" width="3" height="10" fill="#000"/>
<rect x="599" y="355" width="27" height="1" fill="#ffff00"/>
<rect x="631" y="212" width="3" height="194" fill="#ff0000"/>
<rect x="598" y="308" width="33" height="1" fill="#ffff00"/>
<rect x="547" y="313" width="281" height="1" fill="#ffff00"/>
<polygon points="533,295 537,295 538,300 537,306 538,311 536,313 534,313 533,306" fill="#ffff00"/>
<rect x="535" y="298" width="1" height="1" fill="#000"/>
<rect x="535" y="302" width="1" height="1" fill="#000"/>
<rect x="535" y="306" width="1" height="1" fill="#000"/>
<rect x="535" y="309" width="1" height="1" fill="#000"/>
<polyline points="535.5,313 533.5,318 533.5,331 534.5,334" fill="none" stroke="#ffff00" stroke-width="1"/>
<rect x="547" y="235" width="1" height="1" fill="#3a9cb4"/>
<rect x="547" y="237" width="1" height="1" fill="#3a9cb4"/>
<rect x="548" y="236" width="1" height="1" fill="#3a9cb4"/>
<rect x="549" y="237" width="1" height="1" fill="#3a9cb4"/>
<rect x="550" y="235" width="1" height="1" fill="#3a9cb4"/>
<rect x="551" y="236" width="1" height="1" fill="#3a9cb4"/>
<rect x="552" y="235" width="1" height="1" fill="#3a9cb4"/>
<rect x="552" y="237" width="1" height="1" fill="#3a9cb4"/>
<rect x="553" y="236" width="1" height="1" fill="#3a9cb4"/>
<rect x="554" y="237" width="1" height="1" fill="#3a9cb4"/>
<rect x="555" y="235" width="1" height="1" fill="#3a9cb4"/>
<rect x="556" y="236" width="1" height="1" fill="#3a9cb4"/>
<rect x="557" y="235" width="1" height="1" fill="#3a9cb4"/>
<rect x="557" y="237" width="1" height="1" fill="#3a9cb4"/>
<rect x="558" y="236" width="1" height="1" fill="#3a9cb4"/>
<rect x="598" y="242" width="1" height="1" fill="#3a9cb4"/>
<rect x="598" y="244" width="1" height="1" fill="#3a9cb4"/>
<rect x="599" y="243" width="1" height="1" fill="#3a9cb4"/>
<rect x="600" y="244" width="1" height="1" fill="#3a9cb4"/>
<rect x="601" y="242" width="1" height="1" fill="#3a9cb4"/>
<rect x="602" y="243" width="1" height="1" fill="#3a9cb4"/>
<rect x="603" y="242" width="1" height="1" fill="#3a9cb4"/>
<rect x="603" y="244" width="1" height="1" fill="#3a9cb4"/>
<rect x="604" y="243" width="1" height="1" fill="#3a9cb4"/>
<rect x="605" y="244" width="1" height="1" fill="#3a9cb4"/>
<rect x="606" y="242" width="1" height="1" fill="#3a9cb4"/>
<rect x="607" y="243" width="1" height="1" fill="#3a9cb4"/>
<rect x="608" y="242" width="1" height="1" fill="#3a9cb4"/>
<rect x="608" y="244" width="1" height="1" fill="#3a9cb4"/>
<rect x="609" y="243" width="1" height="1" fill="#3a9cb4"/>
<rect x="610" y="244" width="1" height="1" fill="#3a9cb4"/>
<rect x="611" y="242" width="1" height="1" fill="#3a9cb4"/>
<rect x="612" y="243" width="1" height="1" fill="#3a9cb4"/>
<rect x="613" y="242" width="1" height="1" fill="#3a9cb4"/>
<rect x="613" y="244" width="1" height="1" fill="#3a9cb4"/>
<rect x="642" y="261" width="1" height="1" fill="#3a9cb4"/>
<rect x="642" y="263" width="1" height="1" fill="#3a9cb4"/>
<rect x="643" y="262" width="1" height="1" fill="#3a9cb4"/>
<rect x="644" y="263" width="1" height="1" fill="#3a9cb4"/>
<rect x="645" y="261" width="1" height="1" fill="#3a9cb4"/>
<rect x="646" y="262" width="1" height="1" fill="#3a9cb4"/>
<rect x="647" y="261" width="1" height="1" fill="#3a9cb4"/>
<rect x="647" y="263" width="1" height="1" fill="#3a9cb4"/>
<rect x="648" y="262" width="1" height="1" fill="#3a9cb4"/>
<rect x="649" y="263" width="1" height="1" fill="#3a9cb4"/>
<rect x="650" y="261" width="1" height="1" fill="#3a9cb4"/>
<rect x="651" y="262" width="1" height="1" fill="#3a9cb4"/>
<rect x="652" y="261" width="1" height="1" fill="#3a9cb4"/>
<rect x="652" y="263" width="1" height="1" fill="#3a9cb4"/>
<rect x="653" y="262" width="1" height="1" fill="#3a9cb4"/>
<rect x="654" y="263" width="1" height="1" fill="#3a9cb4"/>
<rect x="655" y="261" width="1" height="1" fill="#3a9cb4"/>
<rect x="684" y="206" width="1" height="1" fill="#3a9cb4"/>
<rect x="684" y="208" width="1" height="1" fill="#3a9cb4"/>
<rect x="685" y="207" width="1" height="1" fill="#3a9cb4"/>
<rect x="686" y="208" width="1" height="1" fill="#3a9cb4"/>
<rect x="687" y="206" width="1" height="1" fill="#3a9cb4"/>
<rect x="688" y="207" width="1" height="1" fill="#3a9cb4"/>
<rect x="689" y="206" width="1" height="1" fill="#3a9cb4"/>
<rect x="689" y="208" width="1" height="1" fill="#3a9cb4"/>
<rect x="690" y="207" width="1" height="1" fill="#3a9cb4"/>
<rect x="691" y="208" width="1" height="1" fill="#3a9cb4"/>
<rect x="692" y="206" width="1" height="1" fill="#3a9cb4"/>
<rect x="818" y="417" width="1" height="1" fill="#3a9cb4"/>
<rect x="818" y="419" width="1" height="1" fill="#3a9cb4"/>
<rect x="819" y="418" width="1" height="1" fill="#3a9cb4"/>
<rect x="820" y="419" width="1" height="1" fill="#3a9cb4"/>
<rect x="821" y="417" width="1" height="1" fill="#3a9cb4"/>
<rect x="822" y="418" width="1" height="1" fill="#3a9cb4"/>
<rect x="823" y="417" width="1" height="1" fill="#3a9cb4"/>
<rect x="823" y="419" width="1" height="1" fill="#3a9cb4"/>
<rect x="824" y="418" width="1" height="1" fill="#3a9cb4"/>
<rect x="825" y="419" width="1" height="1" fill="#3a9cb4"/>
<rect x="826" y="417" width="1" height="1" fill="#3a9cb4"/>
<g font-family="Liberation Sans" font-weight="bold" font-style="italic" font-size="11.5" letter-spacing="0.1">
<rect x="14" y="581" width="198" height="1" fill="#ffff00"/>
<rect x="14" y="598" width="198" height="1" fill="#ffff00"/>
<rect x="14" y="615" width="198" height="1" fill="#ffff00"/>
<rect x="14" y="632" width="198" height="1" fill="#ffff00"/>
<rect x="14" y="648" width="198" height="1" fill="#ffff00"/>
<rect x="14" y="665" width="198" height="1" fill="#ffff00"/>
<rect x="14" y="682" width="198" height="1" fill="#ffff00"/>
<rect x="14" y="699" width="198" height="1" fill="#ffff00"/>
<rect x="14" y="581" width="1" height="119" fill="#ffff00"/>
<rect x="211" y="581" width="1" height="119" fill="#ffff00"/>
<rect x="67" y="598" width="1" height="102" fill="#ffff00"/>
<rect x="105" y="598" width="1" height="102" fill="#ffff00"/>
<rect x="158" y="598" width="1" height="102" fill="#ffff00"/>
<text x="17.0" y="594.8" fill="#00ff00">Load</text>
<text transform="translate(108.0 594.8) scale(0.9 1)" fill="#00ff00" letter-spacing="0">1</text>
<text transform="translate(161.0 594.8) scale(0.9 1)" fill="#00ff00" letter-spacing="0">2</text>
<text x="17.0" y="610.7" fill="#00ff00">P</text>
<text x="70.0" y="610.7" fill="#00ff00">kW</text>
<text transform="translate(108.0 610.7) scale(0.9 1)" fill="#00ff00" letter-spacing="0">7,5</text>
<text transform="translate(161.0 610.7) scale(0.9 1)" fill="#00ff00" letter-spacing="0">6,75</text>
<text x="17.0" y="627.7" fill="#00ff00">T</text>
<text x="70.0" y="627.7" fill="#00ff00">Nm</text>
<text transform="translate(108.0 627.7) scale(0.9 1)" fill="#00ff00" letter-spacing="0">47,75</text>
<text transform="translate(161.0 627.7) scale(0.9 1)" fill="#00ff00" letter-spacing="0">816,5</text>
<text x="17.0" y="644.7" fill="#00ff00">n</text>
<text x="70.0" y="644.7" fill="#00ff00">1/min</text>
<text transform="translate(108.0 644.7) scale(0.9 1)" fill="#00ff00" letter-spacing="0">1500</text>
<text transform="translate(161.0 644.7) scale(0.9 1)" fill="#00ff00" letter-spacing="0">78,95</text>
<text x="17.0" y="660.7" fill="#00ff00">tau</text>
<text x="70.0" y="660.7" fill="#00ff00">MPa</text>
<text transform="translate(119.8 660.7) scale(0.9 1)" fill="#00ff00" letter-spacing="0">49</text>
<text transform="translate(172.9 660.7) scale(0.9 1)" fill="#00ff00" letter-spacing="0">77</text>
<text x="17.0" y="677.7" fill="#00ff00">Sig.b</text>
<text x="70.0" y="677.7" fill="#00ff00">MPa</text>
<text transform="translate(119.8 677.7) scale(0.9 1)" fill="#00ff00" letter-spacing="0">70</text>
<text transform="translate(170.3 677.7) scale(0.9 1)" fill="#00ff00" letter-spacing="0">122</text>
<text x="17.0" y="694.7" fill="#00ff00">Sig.v</text>
<text x="70.0" y="694.7" fill="#00ff00">MPa</text>
<text transform="translate(117.4 694.7) scale(0.9 1)" fill="#00ff00" letter-spacing="0">111</text>
<text transform="translate(170.3 694.7) scale(0.9 1)" fill="#00ff00" letter-spacing="0">181</text>
<rect x="14" y="706" width="198" height="1" fill="#ffff00"/>
<rect x="14" y="722" width="198" height="1" fill="#ffff00"/>
<rect x="14" y="739" width="198" height="1" fill="#ffff00"/>
<rect x="14" y="756" width="198" height="1" fill="#ffff00"/>
<rect x="14" y="773" width="198" height="1" fill="#ffff00"/>
<rect x="14" y="790" width="198" height="1" fill="#ffff00"/>
<rect x="14" y="706" width="1" height="85" fill="#ffff00"/>
<rect x="211" y="706" width="1" height="85" fill="#ffff00"/>
<rect x="67" y="722" width="1" height="69" fill="#ffff00"/>
<rect x="105" y="722" width="1" height="69" fill="#ffff00"/>
<rect x="158" y="722" width="1" height="69" fill="#ffff00"/>
<text x="17.0" y="719.8" fill="#00ff00">Dimens.</text>
<text transform="translate(108.0 719.8) scale(0.9 1)" fill="#00ff00" letter-spacing="0">1</text>
<text transform="translate(161.0 719.8) scale(0.9 1)" fill="#00ff00" letter-spacing="0">2</text>
<text x="17.0" y="734.7" fill="#00ff00">dshaft</text>
<text x="70.0" y="734.7" fill="#00ff00">mm</text>
<text transform="translate(108.0 734.7) scale(0.9 1)" fill="#00ff00" letter-spacing="0">17</text>
<text transform="translate(161.0 734.7) scale(0.9 1)" fill="#00ff00" letter-spacing="0">45</text>
<text x="17.0" y="751.7" fill="#00ff00">Lshaft</text>
<text x="70.0" y="751.7" fill="#00ff00">mm</text>
<text transform="translate(108.0 751.7) scale(0.9 1)" fill="#00ff00" letter-spacing="0">25</text>
<text transform="translate(161.0 751.7) scale(0.9 1)" fill="#00ff00" letter-spacing="0">40</text>
<text x="17.0" y="768.7" fill="#00ff00">Fr shaft</text>
<text x="70.0" y="768.7" fill="#00ff00">N</text>
<text transform="translate(108.0 768.7) scale(0.9 1)" fill="#00ff00" letter-spacing="0">0</text>
<text transform="translate(161.0 768.7) scale(0.9 1)" fill="#00ff00" letter-spacing="0">0</text>
<text x="17.0" y="785.7" fill="#00ff00">dgear</text>
<text x="70.0" y="785.7" fill="#00ff00">mm</text>
<text transform="translate(108.0 785.7) scale(0.9 1)" fill="#00ff00" letter-spacing="0">162,5</text>
<text transform="translate(161.0 785.7) scale(0.9 1)" fill="#00ff00" letter-spacing="0">171</text>
<rect x="220" y="581" width="145" height="1" fill="#ffff00"/>
<rect x="220" y="598" width="145" height="1" fill="#ffff00"/>
<rect x="220" y="615" width="145" height="1" fill="#ffff00"/>
<rect x="220" y="632" width="145" height="1" fill="#ffff00"/>
<rect x="220" y="648" width="145" height="1" fill="#ffff00"/>
<rect x="220" y="665" width="145" height="1" fill="#ffff00"/>
<rect x="220" y="682" width="145" height="1" fill="#ffff00"/>
<rect x="220" y="699" width="145" height="1" fill="#ffff00"/>
<rect x="220" y="581" width="1" height="119" fill="#ffff00"/>
<rect x="364" y="581" width="1" height="119" fill="#ffff00"/>
<rect x="273" y="598" width="1" height="102" fill="#ffff00"/>
<rect x="311" y="598" width="1" height="102" fill="#ffff00"/>
<text x="223.0" y="594.8" fill="#00ff00">Dimens. Main</text>
<text x="223.0" y="610.7" fill="#00ff00">iSC</text>
<text transform="translate(314.0 610.7) scale(0.9 1)" fill="#00ff00" letter-spacing="0">-19</text>
<text x="223.0" y="627.7" fill="#00ff00">iSH</text>
<text transform="translate(314.0 627.7) scale(0.9 1)" fill="#00ff00" letter-spacing="0">20</text>
<text x="223.0" y="644.7" fill="#00ff00">exz</text>
<text x="276.0" y="644.7" fill="#00ff00">mm</text>
<text transform="translate(314.0 644.7) scale(0.9 1)" fill="#00ff00" letter-spacing="0">2,138</text>
<text x="223.0" y="660.7" fill="#00ff00">dcase</text>
<text x="276.0" y="660.7" fill="#00ff00">mm</text>
<text transform="translate(314.0 660.7) scale(0.9 1)" fill="#00ff00" letter-spacing="0">205</text>
<text x="223.0" y="677.7" fill="#00ff00">bcase</text>
<text x="276.0" y="677.7" fill="#00ff00">mm</text>
<text transform="translate(314.0 677.7) scale(0.9 1)" fill="#00ff00" letter-spacing="0">116,7</text>
<text x="223.0" y="694.7" fill="#00ff00">L tot</text>
<text x="276.0" y="694.7" fill="#00ff00">mm</text>
<text transform="translate(314.0 694.7) scale(0.9 1)" fill="#00ff00" letter-spacing="0">181,7</text>
<rect x="376" y="581" width="144" height="1" fill="#ffff00"/>
<rect x="376" y="598" width="144" height="1" fill="#ffff00"/>
<rect x="376" y="615" width="144" height="1" fill="#ffff00"/>
<rect x="376" y="632" width="144" height="1" fill="#ffff00"/>
<rect x="376" y="648" width="144" height="1" fill="#ffff00"/>
<rect x="376" y="665" width="144" height="1" fill="#ffff00"/>
<rect x="376" y="682" width="144" height="1" fill="#ffff00"/>
<rect x="376" y="699" width="144" height="1" fill="#ffff00"/>
<rect x="376" y="716" width="144" height="1" fill="#ffff00"/>
<rect x="376" y="732" width="144" height="1" fill="#ffff00"/>
<rect x="376" y="581" width="1" height="152" fill="#ffff00"/>
<rect x="519" y="581" width="1" height="152" fill="#ffff00"/>
<rect x="429" y="598" width="1" height="135" fill="#ffff00"/>
<rect x="466" y="598" width="1" height="135" fill="#ffff00"/>
<text x="379.0" y="594.8" fill="#00ff00">Load capacity</text>
<text x="379.0" y="610.7" fill="#00ff00">Ft gear</text>
<text x="432.0" y="610.7" fill="#00ff00">N</text>
<text transform="translate(469.0 610.7) scale(0.9 1)" fill="#00ff00" letter-spacing="0">10487</text>
<text x="379.0" y="627.7" fill="#00ff00">Fr gear</text>
<text x="432.0" y="627.7" fill="#00ff00">N</text>
<text transform="translate(469.0 627.7) scale(0.9 1)" fill="#00ff00" letter-spacing="0">33167</text>
<text x="379.0" y="644.7" fill="#00ff00">Fn gear</text>
<text x="432.0" y="644.7" fill="#00ff00">N</text>
<text transform="translate(469.0 644.7) scale(0.9 1)" fill="#00ff00" letter-spacing="0">34785</text>
<text x="379.0" y="660.7" fill="#00ff00">pHzGear</text>
<text x="432.0" y="660.7" fill="#00ff00">MPa</text>
<text transform="translate(474.7 660.7) scale(0.9 1)" fill="#00ff00" letter-spacing="0">1760</text>
<text x="379.0" y="677.7" fill="#00ff00">Ft bolt</text>
<text x="432.0" y="677.7" fill="#00ff00">N</text>
<text transform="translate(469.0 677.7) scale(0.9 1)" fill="#00ff00" letter-spacing="0">7631</text>
<text x="379.0" y="694.7" fill="#00ff00">p max z</text>
<text x="432.0" y="694.7" fill="#00ff00">MPa</text>
<text transform="translate(479.8 694.7) scale(0.9 1)" fill="#00ff00" letter-spacing="0">44</text>
<text x="379.0" y="711.7" fill="#00ff00">Sig.b.z</text>
<text x="432.0" y="711.7" fill="#00ff00">MPa</text>
<text transform="translate(475.0 711.7) scale(0.9 1)" fill="#00ff00" letter-spacing="0">383</text>
<text x="379.0" y="728.7" fill="#00ff00">p Hertz</text>
<text x="432.0" y="728.7" fill="#00ff00">MPa</text>
<text transform="translate(474.7 728.7) scale(0.9 1)" fill="#00ff00" letter-spacing="0">1293</text>
<rect x="625" y="581" width="356" height="1" fill="#ffff00"/>
<rect x="625" y="598" width="356" height="1" fill="#ffff00"/>
<rect x="625" y="615" width="356" height="1" fill="#ffff00"/>
<rect x="625" y="632" width="356" height="1" fill="#ffff00"/>
<rect x="625" y="648" width="356" height="1" fill="#ffff00"/>
<rect x="625" y="665" width="356" height="1" fill="#ffff00"/>
<rect x="625" y="682" width="356" height="1" fill="#ffff00"/>
<rect x="625" y="699" width="356" height="1" fill="#ffff00"/>
<rect x="625" y="716" width="356" height="1" fill="#ffff00"/>
<rect x="625" y="732" width="356" height="1" fill="#ffff00"/>
<rect x="625" y="749" width="356" height="1" fill="#ffff00"/>
<rect x="625" y="581" width="1" height="169" fill="#ffff00"/>
<rect x="980" y="581" width="1" height="169" fill="#ffff00"/>
<rect x="678" y="598" width="1" height="152" fill="#ffff00"/>
<rect x="715" y="598" width="1" height="152" fill="#ffff00"/>
<rect x="768" y="598" width="1" height="152" fill="#ffff00"/>
<rect x="821" y="598" width="1" height="152" fill="#ffff00"/>
<rect x="874" y="598" width="1" height="152" fill="#ffff00"/>
<rect x="927" y="598" width="1" height="152" fill="#ffff00"/>
<text x="628.0" y="594.8" fill="#00ff00">Bearings</text>
<text transform="translate(718.0 594.8) scale(0.9 1)" fill="#00ff00" letter-spacing="0">1</text>
<text transform="translate(771.0 594.8) scale(0.9 1)" fill="#00ff00" letter-spacing="0">2</text>
<text transform="translate(824.0 594.8) scale(0.9 1)" fill="#00ff00" letter-spacing="0">3</text>
<text transform="translate(877.0 594.8) scale(0.9 1)" fill="#00ff00" letter-spacing="0">4</text>
<text transform="translate(930.0 594.8) scale(0.9 1)" fill="#00ff00" letter-spacing="0">5</text>
<text x="628.0" y="610.7" fill="#00ff00">Name</text>
<text transform="translate(718.0 610.7) scale(0.9 1)" fill="#00ff00" letter-spacing="0">6403</text>
<text x="771.0" y="610.7" fill="#00ff00">NUP</text>
<text x="824.0" y="610.7" fill="#00ff00">NU</text>
<text transform="translate(877.0 610.7) scale(0.9 1)" fill="#00ff00" letter-spacing="0">32209</text>
<text transform="translate(930.0 610.7) scale(0.9 1)" fill="#00ff00" letter-spacing="0">32209</text>
<text x="628.0" y="627.7" fill="#00ff00">Loc.</text>
<text x="718.0" y="627.7" fill="#00ff00">in/case</text>
<text x="771.0" y="627.7" fill="#00ff00">ecc./gear</text>
<text x="824.0" y="627.7" fill="#00ff00">in/out</text>
<text x="877.0" y="627.7" fill="#00ff00">out/case</text>
<text x="930.0" y="627.7" fill="#00ff00">out/case</text>
<text x="628.0" y="644.7" fill="#00ff00">Fr</text>
<text x="681.0" y="644.7" fill="#00ff00">N</text>
<text transform="translate(726.5 644.7) scale(0.9 1)" fill="#00ff00" letter-spacing="0">15607</text>
<text transform="translate(779.5 644.7) scale(0.9 1)" fill="#00ff00" letter-spacing="0">33509</text>
<text transform="translate(832.5 644.7) scale(0.9 1)" fill="#00ff00" letter-spacing="0">17902</text>
<text transform="translate(885.5 644.7) scale(0.9 1)" fill="#00ff00" letter-spacing="0">72734</text>
<text transform="translate(938.5 644.7) scale(0.9 1)" fill="#00ff00" letter-spacing="0">36224</text>
<text x="628.0" y="660.7" fill="#00ff00">C</text>
<text x="681.0" y="660.7" fill="#00ff00">N</text>
<text transform="translate(718.0 660.7) scale(0.9 1)" fill="#00ff00" letter-spacing="0">22900</text>
<text transform="translate(771.0 660.7) scale(0.9 1)" fill="#00ff00" letter-spacing="0">28600</text>
<text transform="translate(824.0 660.7) scale(0.9 1)" fill="#00ff00" letter-spacing="0">17200</text>
<text transform="translate(877.0 660.7) scale(0.9 1)" fill="#00ff00" letter-spacing="0">80900</text>
<text transform="translate(930.0 660.7) scale(0.9 1)" fill="#00ff00" letter-spacing="0">80900</text>
<text x="628.0" y="677.7" fill="#00ff00">C0</text>
<text x="681.0" y="677.7" fill="#00ff00">N</text>
<text transform="translate(718.0 677.7) scale(0.9 1)" fill="#00ff00" letter-spacing="0">10800</text>
<text transform="translate(771.0 677.7) scale(0.9 1)" fill="#00ff00" letter-spacing="0">27000</text>
<text transform="translate(824.0 677.7) scale(0.9 1)" fill="#00ff00" letter-spacing="0">14300</text>
<text transform="translate(877.0 677.7) scale(0.9 1)" fill="#00ff00" letter-spacing="0">98000</text>
<text transform="translate(930.0 677.7) scale(0.9 1)" fill="#00ff00" letter-spacing="0">98000</text>
<text x="628.0" y="694.7" fill="#00ff00">Cu</text>
<text x="681.0" y="694.7" fill="#00ff00">N</text>
<text transform="translate(718.0 694.7) scale(0.9 1)" fill="#00ff00" letter-spacing="0">455</text>
<text transform="translate(771.0 694.7) scale(0.9 1)" fill="#00ff00" letter-spacing="0">3350</text>
<text transform="translate(824.0 694.7) scale(0.9 1)" fill="#00ff00" letter-spacing="0">1730</text>
<text transform="translate(877.0 694.7) scale(0.9 1)" fill="#00ff00" letter-spacing="0">11000</text>
<text transform="translate(930.0 694.7) scale(0.9 1)" fill="#00ff00" letter-spacing="0">11000</text>
<text x="628.0" y="711.7" fill="#00ff00">S0</text>
<text transform="translate(718.0 711.7) scale(0.9 1)" fill="#00ff00" letter-spacing="0">0,692</text>
<text transform="translate(771.0 711.7) scale(0.9 1)" fill="#00ff00" letter-spacing="0">0,806</text>
<text transform="translate(824.0 711.7) scale(0.9 1)" fill="#00ff00" letter-spacing="0">0,799</text>
<text transform="translate(877.0 711.7) scale(0.9 1)" fill="#00ff00" letter-spacing="0">1,347</text>
<text transform="translate(930.0 711.7) scale(0.9 1)" fill="#00ff00" letter-spacing="0">2,705</text>
<text x="628.0" y="728.7" fill="#00ff00">S</text>
<text transform="translate(718.0 728.7) scale(0.9 1)" fill="#00ff00" letter-spacing="0">1,467</text>
<text transform="translate(771.0 728.7) scale(0.9 1)" fill="#00ff00" letter-spacing="0">0,854</text>
<text transform="translate(824.0 728.7) scale(0.9 1)" fill="#00ff00" letter-spacing="0">0,96</text>
<text transform="translate(877.0 728.7) scale(0.9 1)" fill="#00ff00" letter-spacing="0">1,112</text>
<text transform="translate(930.0 728.7) scale(0.9 1)" fill="#00ff00" letter-spacing="0">2,233</text>
<text x="628.0" y="744.7" fill="#00ff00">L10</text>
<text x="681.0" y="744.7" fill="#00ff00">1E6</text>
<text transform="translate(718.0 744.7) scale(0.9 1)" fill="#00ff00" letter-spacing="0">3,159</text>
<text transform="translate(771.0 744.7) scale(0.9 1)" fill="#00ff00" letter-spacing="0">0,590</text>
<text transform="translate(824.0 744.7) scale(0.9 1)" fill="#00ff00" letter-spacing="0">0,875</text>
<text transform="translate(877.0 744.7) scale(0.9 1)" fill="#00ff00" letter-spacing="0">1,426</text>
<text transform="translate(930.0 744.7) scale(0.9 1)" fill="#00ff00" letter-spacing="0">14,56</text>
</g></svg>
<div id="title"><div id="hl"></div><svg width="16" height="16" viewBox="0 0 16 16" style="position:absolute;left:9px;top:7px">
<circle cx="8" cy="8" r="7.6" fill="#f2c200"/>
<circle cx="8" cy="8" r="5.6" fill="#1e8ff0"/>
<circle cx="8" cy="8" r="1.6" fill="#1d6b2a"/>
<g fill="#8a1010"><circle cx="8" cy="1.2" r="0.9"/><circle cx="8" cy="14.8" r="0.9"/><circle cx="1.2" cy="8" r="0.9"/><circle cx="14.8" cy="8" r="0.9"/>
<circle cx="3.2" cy="3.2" r="0.9"/><circle cx="12.8" cy="3.2" r="0.9"/><circle cx="3.2" cy="12.8" r="0.9"/><circle cx="12.8" cy="12.8" r="0.9"/></g>
<g fill="#b8d8f8"><circle cx="8" cy="4.3" r="0.7"/><circle cx="8" cy="11.7" r="0.7"/><circle cx="4.3" cy="8" r="0.7"/><circle cx="11.7" cy="8" r="0.7"/>
<circle cx="5.4" cy="5.4" r="0.7"/><circle cx="10.6" cy="5.4" r="0.7"/><circle cx="5.4" cy="10.6" r="0.7"/><circle cx="10.6" cy="10.6" r="0.7"/></g>
</svg><div id="ttxt">GR3  cycloidal gear  -  gr3.gr3</div>
<svg width="1002" height="31" style="position:absolute;left:0;top:0" shape-rendering="geometricPrecision">
<line x1="882" y1="15.5" x2="892" y2="15.5" stroke="#1b1b1b" stroke-width="1"/>
<rect x="927.5" y="10.5" width="9" height="9" rx="1" fill="none" stroke="#1b1b1b" stroke-width="1"/>
<path d="M973 10 L983 20 M983 10 L973 20" stroke="#1b1b1b" stroke-width="1"/>
</svg></div>
<div id="menu"><span style="position:absolute;left:8.5px;top:0"><u>F</u>ile</span><span style="position:absolute;left:40.5px;top:0"><u>E</u>dit</span><span style="position:absolute;left:74px;top:0"><u>V</u>iew</span><span style="position:absolute;left:114px;top:0"><u>C</u>AD</span><span style="position:absolute;left:151px;top:0"><u>S</u>TL</span><span style="position:absolute;left:183.5px;top:0">D<u>o</u>cument</span><span style="position:absolute;left:253.5px;top:0">O<u>L</u>E</span><span style="position:absolute;left:288.5px;top:0"><u>H</u>elp</span></div>
</div>
<div style="position:absolute;left:6px;top:0;width:990px;height:1px;background:#374b73"></div>
<div style="position:absolute;left:0;top:8px;width:1px;height:778px;background:#556487"></div>
<div style="position:absolute;left:1001px;top:8px;width:1px;height:778px;background:#3a5fa0"></div>
<div style="position:absolute;left:6px;top:793px;width:990px;height:1px;background:#324b82"></div>
</body></html>
